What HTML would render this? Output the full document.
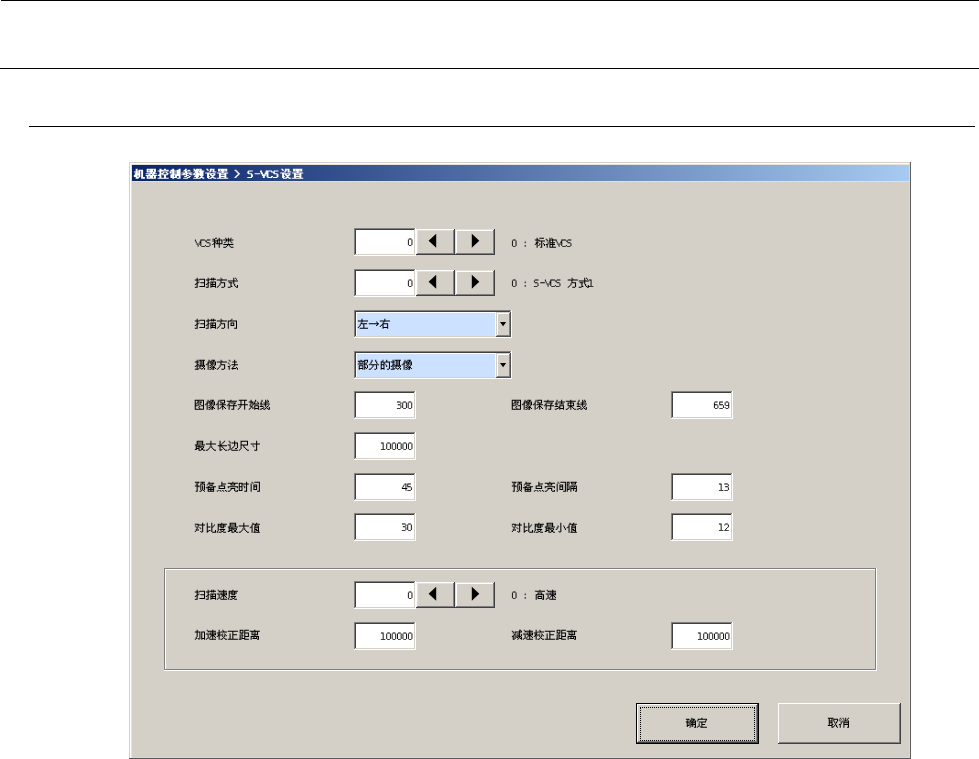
<!DOCTYPE html>
<html><head><meta charset="utf-8"><style>
html,body{margin:0;padding:0;background:#fff;}
body{width:979px;height:759px;position:relative;overflow:hidden;font-family:"Liberation Sans",sans-serif;}
.a{position:absolute;}
.t{position:absolute;overflow:visible;}
</style></head><body>

<div class="a" style="left:1px;top:0px;width:978px;height:1px;background:#000"></div>
<div class="a" style="left:0px;top:68px;width:979px;height:1px;background:#000"></div>
<div class="a" style="left:29px;top:126px;width:946px;height:1px;background:#000"></div>
<div class="a" style="left:129px;top:162px;width:782px;height:597px;background:#d4d0c8"></div>
<div class="a" style="left:130px;top:163px;width:780px;height:1px;background:#fff"></div>
<div class="a" style="left:130px;top:163px;width:1px;height:595px;background:#fff"></div>
<div class="a" style="left:131px;top:164px;width:778px;height:1px;background:#e6e2da"></div>
<div class="a" style="left:131px;top:164px;width:1px;height:593px;background:#e6e2da"></div>
<div class="a" style="left:909px;top:163px;width:1px;height:595px;background:#dcd8d0"></div>
<div class="a" style="left:131px;top:757px;width:779px;height:1px;background:#dcd8d0"></div>
<div class="a" style="left:910px;top:162px;width:1px;height:597px;background:#606060"></div>
<div class="a" style="left:129px;top:758px;width:782px;height:1px;background:#585858"></div>
<div class="a" style="left:132px;top:165px;width:777px;height:16px;background:linear-gradient(to right,#0a246a,#a6caf0)"></div>
<div class="a" style="left:132px;top:181px;width:777px;height:1px;background:#e4e0d8"></div>
<svg class="t" style="left:131.67px;top:166.50px" width="172.02" height="14.40" viewBox="0 0 188 16" preserveAspectRatio="none"><path fill="#fff" d="M4 2h2.12v1.12h-2.12zM16 2h10.12v1.12h-10.12zM30 2h2.12v1.12h-2.12zM35 2h2.12v1.12h-2.12zM44 2h2.12v1.12h-2.12zM51 2h2.12v1.12h-2.12zM58 2h2.12v1.12h-2.12zM67 2h2.12v1.12h-2.12zM70 2h6.12v1.12h-6.12zM81 2h2.12v1.12h-2.12zM85 2h5.12v1.12h-5.12zM94 2h10.12v1.12h-10.12zM163 2h2.12v1.12h-2.12zM167 2h5.12v1.12h-5.12zM176 2h10.12v1.12h-10.12zM4 3h2.12v1.12h-2.12zM7 3h5.12v1.12h-5.12zM16 3h2.12v1.12h-2.12zM19 3h4.12v1.12h-4.12zM24 3h2.12v1.12h-2.12zM30 3h10.12v1.12h-10.12zM42 3h4.12v1.12h-4.12zM49 3h4.12v1.12h-4.12zM57 3h2.12v1.12h-2.12zM61 3h2.12v1.12h-2.12zM68 3h5.12v1.12h-5.12zM74 3h2.12v1.12h-2.12zM82 3h2.12v1.12h-2.12zM85 3h2.12v1.12h-2.12zM88 3h2.12v1.12h-2.12zM94 3h2.12v1.12h-2.12zM97 3h4.12v1.12h-4.12zM102 3h2.12v1.12h-2.12zM112 3h2.12v1.12h-2.12zM164 3h2.12v1.12h-2.12zM167 3h2.12v1.12h-2.12zM170 3h2.12v1.12h-2.12zM176 3h2.12v1.12h-2.12zM179 3h4.12v1.12h-4.12zM184 3h2.12v1.12h-2.12zM4 4h2.12v1.12h-2.12zM7 4h2.12v1.12h-2.12zM10 4h2.12v1.12h-2.12zM16 4h2.12v1.12h-2.12zM19 4h4.12v1.12h-4.12zM24 4h2.12v1.12h-2.12zM28 4h6.12v1.12h-6.12zM38 4h2.12v1.12h-2.12zM42 4h11.12v1.12h-11.12zM56 4h8.12v1.12h-8.12zM67 4h12.12v1.12h-12.12zM85 4h2.12v1.12h-2.12zM88 4h2.12v1.12h-2.12zM94 4h10.12v1.12h-10.12zM113 4h2.12v1.12h-2.12zM127 4h5.12v1.12h-5.12zM140 4h2.12v1.12h-2.12zM146 4h7.12v1.12h-7.12zM155 4h5.12v1.12h-5.12zM167 4h2.12v1.12h-2.12zM170 4h2.12v1.12h-2.12zM176 4h10.12v1.12h-10.12zM2 5h7.12v1.12h-7.12zM10 5h2.12v1.12h-2.12zM16 5h10.12v1.12h-10.12zM30 5h2.12v1.12h-2.12zM34 5h4.12v1.12h-4.12zM41 5h2.12v1.12h-2.12zM44 5h2.12v1.12h-2.12zM49 5h4.12v1.12h-4.12zM58 5h2.12v1.12h-2.12zM69 5h3.12v1.12h-3.12zM73 5h5.12v1.12h-5.12zM84 5h2.12v1.12h-2.12zM88 5h4.12v1.12h-4.12zM98 5h2.12v1.12h-2.12zM114 5h2.12v1.12h-2.12zM126 5h2.12v1.12h-2.12zM140 5h2.12v1.12h-2.12zM146 5h3.12v1.12h-3.12zM152 5h4.12v1.12h-4.12zM166 5h2.12v1.12h-2.12zM170 5h4.12v1.12h-4.12zM180 5h2.12v1.12h-2.12zM4 6h2.12v1.12h-2.12zM7 6h2.12v1.12h-2.12zM10 6h2.12v1.12h-2.12zM20 6h2.12v1.12h-2.12zM23 6h2.12v1.12h-2.12zM30 6h2.12v1.12h-2.12zM33 6h2.12v1.12h-2.12zM37 6h2.12v1.12h-2.12zM41 6h12.12v1.12h-12.12zM54 6h12.12v1.12h-12.12zM68 6h5.12v1.12h-5.12zM74 6h4.12v1.12h-4.12zM80 6h4.12v1.12h-4.12zM93 6h12.12v1.12h-12.12zM115 6h2.12v1.12h-2.12zM126 6h2.12v1.12h-2.12zM141 6h2.12v1.12h-2.12zM145 6h4.12v1.12h-4.12zM154 6h2.12v1.12h-2.12zM162 6h4.12v1.12h-4.12zM175 6h12.12v1.12h-12.12zM3 7h6.12v1.12h-6.12zM10 7h2.12v1.12h-2.12zM15 7h12.12v1.12h-12.12zM30 7h4.12v1.12h-4.12zM38 7h2.12v1.12h-2.12zM44 7h2.12v1.12h-2.12zM49 7h4.12v1.12h-4.12zM56 7h2.12v1.12h-2.12zM59 7h2.12v1.12h-2.12zM62 7h2.12v1.12h-2.12zM67 7h2.12v1.12h-2.12zM70 7h8.12v1.12h-8.12zM82 7h9.12v1.12h-9.12zM95 7h2.12v1.12h-2.12zM101 7h2.12v1.12h-2.12zM116 7h2.12v1.12h-2.12zM127 7h4.12v1.12h-4.12zM134 7h6.12v1.12h-6.12zM141 7h2.12v1.12h-2.12zM145 7h4.12v1.12h-4.12zM155 7h4.12v1.12h-4.12zM164 7h9.12v1.12h-9.12zM177 7h2.12v1.12h-2.12zM183 7h2.12v1.12h-2.12zM3 8h6.12v1.12h-6.12zM10 8h2.12v1.12h-2.12zM18 8h2.12v1.12h-2.12zM22 8h2.12v1.12h-2.12zM29 8h3.12v1.12h-3.12zM33 8h6.12v1.12h-6.12zM42 8h11.12v1.12h-11.12zM54 8h6.12v1.12h-6.12zM63 8h3.12v1.12h-3.12zM67 8h11.12v1.12h-11.12zM82 8h2.12v1.12h-2.12zM85 8h2.12v1.12h-2.12zM89 8h2.12v1.12h-2.12zM95 8h8.12v1.12h-8.12zM115 8h2.12v1.12h-2.12zM130 8h2.12v1.12h-2.12zM142 8h4.12v1.12h-4.12zM147 8h2.12v1.12h-2.12zM158 8h2.12v1.12h-2.12zM164 8h2.12v1.12h-2.12zM167 8h2.12v1.12h-2.12zM171 8h2.12v1.12h-2.12zM177 8h8.12v1.12h-8.12zM2 9h4.12v1.12h-4.12zM7 9h2.12v1.12h-2.12zM10 9h2.12v1.12h-2.12zM15 9h12.12v1.12h-12.12zM28 9h4.12v1.12h-4.12zM35 9h2.12v1.12h-2.12zM42 9h4.12v1.12h-4.12zM47 9h6.12v1.12h-6.12zM59 9h3.12v1.12h-3.12zM69 9h4.12v1.12h-4.12zM74 9h4.12v1.12h-4.12zM82 9h2.12v1.12h-2.12zM86 9h4.12v1.12h-4.12zM95 9h2.12v1.12h-2.12zM101 9h2.12v1.12h-2.12zM114 9h2.12v1.12h-2.12zM130 9h2.12v1.12h-2.12zM142 9h4.12v1.12h-4.12zM147 9h2.12v1.12h-2.12zM158 9h2.12v1.12h-2.12zM164 9h2.12v1.12h-2.12zM168 9h4.12v1.12h-4.12zM177 9h2.12v1.12h-2.12zM183 9h2.12v1.12h-2.12zM2 10h4.12v1.12h-4.12zM7 10h2.12v1.12h-2.12zM10 10h2.12v1.12h-2.12zM16 10h2.12v1.12h-2.12zM19 10h4.12v1.12h-4.12zM24 10h2.12v1.12h-2.12zM30 10h2.12v1.12h-2.12zM35 10h2.12v1.12h-2.12zM42 10h4.12v1.12h-4.12zM47 10h2.12v1.12h-2.12zM51 10h2.12v1.12h-2.12zM57 10h3.12v1.12h-3.12zM62 10h2.12v1.12h-2.12zM68 10h5.12v1.12h-5.12zM75 10h2.12v1.12h-2.12zM82 10h3.12v1.12h-3.12zM87 10h2.12v1.12h-2.12zM95 10h8.12v1.12h-8.12zM113 10h2.12v1.12h-2.12zM130 10h2.12v1.12h-2.12zM143 10h2.12v1.12h-2.12zM147 10h2.12v1.12h-2.12zM152 10h2.12v1.12h-2.12zM158 10h2.12v1.12h-2.12zM164 10h3.12v1.12h-3.12zM169 10h2.12v1.12h-2.12zM177 10h8.12v1.12h-8.12zM4 11h4.12v1.12h-4.12zM10 11h4.12v1.12h-4.12zM16 11h2.12v1.12h-2.12zM19 11h4.12v1.12h-4.12zM24 11h2.12v1.12h-2.12zM30 11h2.12v1.12h-2.12zM35 11h2.12v1.12h-2.12zM42 11h7.12v1.12h-7.12zM51 11h2.12v1.12h-2.12zM60 11h3.12v1.12h-3.12zM70 11h2.12v1.12h-2.12zM74 11h4.12v1.12h-4.12zM82 11h2.12v1.12h-2.12zM86 11h4.12v1.12h-4.12zM95 11h2.12v1.12h-2.12zM101 11h2.12v1.12h-2.12zM112 11h2.12v1.12h-2.12zM126 11h5.12v1.12h-5.12zM143 11h2.12v1.12h-2.12zM148 11h5.12v1.12h-5.12zM154 11h5.12v1.12h-5.12zM164 11h2.12v1.12h-2.12zM168 11h4.12v1.12h-4.12zM177 11h2.12v1.12h-2.12zM183 11h2.12v1.12h-2.12zM4 12h3.12v1.12h-3.12zM10 12h4.12v1.12h-4.12zM16 12h10.12v1.12h-10.12zM28 12h12.12v1.12h-12.12zM44 12h2.12v1.12h-2.12zM49 12h4.12v1.12h-4.12zM56 12h5.12v1.12h-5.12zM67 12h8.12v1.12h-8.12zM77 12h2.12v1.12h-2.12zM83 12h4.12v1.12h-4.12zM89 12h3.12v1.12h-3.12zM93 12h12.12v1.12h-12.12zM165 12h4.12v1.12h-4.12zM171 12h3.12v1.12h-3.12zM175 12h12.12v1.12h-12.12z"/></svg>
<svg class="t" style="left:194.09px;top:235.50px" width="40.26" height="14.40" viewBox="0 0 44 16" preserveAspectRatio="none"><path fill="#000" d="M23 2h2.12v1.12h-2.12zM27 2h1.12v1.12h-1.12zM34 2h1.12v1.12h-1.12zM37 2h1.12v1.12h-1.12zM40 2h1.12v1.12h-1.12zM21 3h2.12v1.12h-2.12zM27 3h1.12v1.12h-1.12zM35 3h1.12v1.12h-1.12zM37 3h1.12v1.12h-1.12zM39 3h1.12v1.12h-1.12zM22 4h1.12v1.12h-1.12zM25 4h6.12v1.12h-6.12zM32 4h11.12v1.12h-11.12zM21 5h5.12v1.12h-5.12zM27 5h1.12v1.12h-1.12zM30 5h1.12v1.12h-1.12zM35 5h1.12v1.12h-1.12zM37 5h1.12v1.12h-1.12zM39 5h1.12v1.12h-1.12zM22 6h1.12v1.12h-1.12zM25 6h1.12v1.12h-1.12zM27 6h1.12v1.12h-1.12zM30 6h1.12v1.12h-1.12zM34 6h1.12v1.12h-1.12zM37 6h1.12v1.12h-1.12zM40 6h1.12v1.12h-1.12zM22 7h2.12v1.12h-2.12zM25 7h1.12v1.12h-1.12zM27 7h1.12v1.12h-1.12zM30 7h1.12v1.12h-1.12zM33 7h1.12v1.12h-1.12zM41 7h1.12v1.12h-1.12zM21 8h2.12v1.12h-2.12zM24 8h7.12v1.12h-7.12zM37 8h1.12v1.12h-1.12zM22 9h1.12v1.12h-1.12zM27 9h1.12v1.12h-1.12zM32 9h11.12v1.12h-11.12zM22 10h1.12v1.12h-1.12zM27 10h1.12v1.12h-1.12zM36 10h1.12v1.12h-1.12zM38 10h1.12v1.12h-1.12zM22 11h1.12v1.12h-1.12zM27 11h1.12v1.12h-1.12zM35 11h1.12v1.12h-1.12zM39 11h1.12v1.12h-1.12zM22 12h1.12v1.12h-1.12zM27 12h1.12v1.12h-1.12zM32 12h3.12v1.12h-3.12zM40 12h3.12v1.12h-3.12zM20 3h1v1h-1zM1 4h1v1h-1zM7 4h5v1h-5zM14 4h4v1h-4zM1 5h1v1h-1zM7 5h1v1h-1zM12 5h2v1h-2zM20 5h1v1h-1zM2 6h1v1h-1zM6 6h2v1h-2zM13 6h1v1h-1zM2 7h1v1h-1zM6 7h2v1h-2zM14 7h3v1h-3zM3 8h1v1h-1zM5 8h1v1h-1zM7 8h1v1h-1zM17 8h1v1h-1zM3 9h1v1h-1zM5 9h1v1h-1zM7 9h1v1h-1zM17 9h1v1h-1zM20 9h1v1h-1zM4 10h1v1h-1zM7 10h1v1h-1zM12 10h1v1h-1zM17 10h1v1h-1zM4 11h1v1h-1zM8 11h4v1h-4zM13 11h4v1h-4z"/></svg>
<svg class="t" style="left:193.17px;top:275.70px" width="45.75" height="14.40" viewBox="0 0 50 16" preserveAspectRatio="none"><path fill="#000" d="M4 2h1.12v1.12h-1.12zM16 2h1.12v1.12h-1.12zM20 2h1.12v1.12h-1.12zM22 2h1.12v1.12h-1.12zM30 2h1.12v1.12h-1.12zM44 2h1.12v1.12h-1.12zM46 2h1.12v1.12h-1.12zM4 3h1.12v1.12h-1.12zM7 3h6.12v1.12h-6.12zM16 3h1.12v1.12h-1.12zM18 3h7.12v1.12h-7.12zM31 3h1.12v1.12h-1.12zM44 3h1.12v1.12h-1.12zM47 3h1.12v1.12h-1.12zM2 4h5.12v1.12h-5.12zM12 4h1.12v1.12h-1.12zM14 4h4.12v1.12h-4.12zM20 4h1.12v1.12h-1.12zM22 4h1.12v1.12h-1.12zM26 4h11.12v1.12h-11.12zM44 4h1.12v1.12h-1.12zM4 5h1.12v1.12h-1.12zM12 5h1.12v1.12h-1.12zM16 5h1.12v1.12h-1.12zM30 5h1.12v1.12h-1.12zM38 5h11.12v1.12h-11.12zM4 6h1.12v1.12h-1.12zM6 6h1.12v1.12h-1.12zM12 6h1.12v1.12h-1.12zM16 6h1.12v1.12h-1.12zM19 6h6.12v1.12h-6.12zM30 6h1.12v1.12h-1.12zM44 6h1.12v1.12h-1.12zM4 7h2.12v1.12h-2.12zM8 7h5.12v1.12h-5.12zM16 7h2.12v1.12h-2.12zM19 7h1.12v1.12h-1.12zM21 7h1.12v1.12h-1.12zM24 7h1.12v1.12h-1.12zM30 7h5.12v1.12h-5.12zM39 7h4.12v1.12h-4.12zM44 7h1.12v1.12h-1.12zM3 8h2.12v1.12h-2.12zM12 8h1.12v1.12h-1.12zM15 8h2.12v1.12h-2.12zM19 8h1.12v1.12h-1.12zM21 8h1.12v1.12h-1.12zM24 8h1.12v1.12h-1.12zM29 8h1.12v1.12h-1.12zM34 8h1.12v1.12h-1.12zM41 8h1.12v1.12h-1.12zM44 8h1.12v1.12h-1.12zM2 9h1.12v1.12h-1.12zM4 9h1.12v1.12h-1.12zM12 9h1.12v1.12h-1.12zM14 9h1.12v1.12h-1.12zM16 9h1.12v1.12h-1.12zM19 9h6.12v1.12h-6.12zM29 9h1.12v1.12h-1.12zM34 9h1.12v1.12h-1.12zM41 9h1.12v1.12h-1.12zM45 9h1.12v1.12h-1.12zM4 10h1.12v1.12h-1.12zM12 10h1.12v1.12h-1.12zM16 10h1.12v1.12h-1.12zM19 10h1.12v1.12h-1.12zM21 10h1.12v1.12h-1.12zM24 10h1.12v1.12h-1.12zM28 10h1.12v1.12h-1.12zM34 10h1.12v1.12h-1.12zM41 10h1.12v1.12h-1.12zM45 10h1.12v1.12h-1.12zM48 10h1.12v1.12h-1.12zM4 11h1.12v1.12h-1.12zM7 11h6.12v1.12h-6.12zM16 11h1.12v1.12h-1.12zM19 11h6.12v1.12h-6.12zM27 11h1.12v1.12h-1.12zM34 11h1.12v1.12h-1.12zM41 11h2.12v1.12h-2.12zM46 11h1.12v1.12h-1.12zM48 11h1.12v1.12h-1.12zM2 12h3.12v1.12h-3.12zM14 12h3.12v1.12h-3.12zM19 12h1.12v1.12h-1.12zM24 12h1.12v1.12h-1.12zM26 12h1.12v1.12h-1.12zM31 12h3.12v1.12h-3.12zM38 12h3.12v1.12h-3.12zM47 12h2.12v1.12h-2.12z"/></svg>
<svg class="t" style="left:193.17px;top:316.60px" width="44.84" height="14.40" viewBox="0 0 49 16" preserveAspectRatio="none"><path fill="#000" d="M4 2h1.12v1.12h-1.12zM16 2h1.12v1.12h-1.12zM20 2h1.12v1.12h-1.12zM22 2h1.12v1.12h-1.12zM30 2h1.12v1.12h-1.12zM42 2h1.12v1.12h-1.12zM4 3h1.12v1.12h-1.12zM7 3h6.12v1.12h-6.12zM16 3h1.12v1.12h-1.12zM18 3h7.12v1.12h-7.12zM31 3h1.12v1.12h-1.12zM41 3h1.12v1.12h-1.12zM2 4h5.12v1.12h-5.12zM12 4h1.12v1.12h-1.12zM14 4h4.12v1.12h-4.12zM20 4h1.12v1.12h-1.12zM22 4h1.12v1.12h-1.12zM26 4h11.12v1.12h-11.12zM38 4h10.12v1.12h-10.12zM4 5h1.12v1.12h-1.12zM12 5h1.12v1.12h-1.12zM16 5h1.12v1.12h-1.12zM30 5h1.12v1.12h-1.12zM38 5h1.12v1.12h-1.12zM47 5h1.12v1.12h-1.12zM4 6h1.12v1.12h-1.12zM6 6h1.12v1.12h-1.12zM12 6h1.12v1.12h-1.12zM16 6h1.12v1.12h-1.12zM19 6h6.12v1.12h-6.12zM30 6h1.12v1.12h-1.12zM38 6h1.12v1.12h-1.12zM41 6h4.12v1.12h-4.12zM47 6h1.12v1.12h-1.12zM4 7h2.12v1.12h-2.12zM8 7h5.12v1.12h-5.12zM16 7h2.12v1.12h-2.12zM19 7h1.12v1.12h-1.12zM21 7h1.12v1.12h-1.12zM24 7h1.12v1.12h-1.12zM30 7h5.12v1.12h-5.12zM38 7h1.12v1.12h-1.12zM41 7h1.12v1.12h-1.12zM44 7h1.12v1.12h-1.12zM47 7h1.12v1.12h-1.12zM3 8h2.12v1.12h-2.12zM12 8h1.12v1.12h-1.12zM15 8h2.12v1.12h-2.12zM19 8h1.12v1.12h-1.12zM21 8h1.12v1.12h-1.12zM24 8h1.12v1.12h-1.12zM29 8h1.12v1.12h-1.12zM34 8h1.12v1.12h-1.12zM38 8h1.12v1.12h-1.12zM41 8h1.12v1.12h-1.12zM44 8h1.12v1.12h-1.12zM47 8h1.12v1.12h-1.12zM2 9h1.12v1.12h-1.12zM4 9h1.12v1.12h-1.12zM12 9h1.12v1.12h-1.12zM14 9h1.12v1.12h-1.12zM16 9h1.12v1.12h-1.12zM19 9h6.12v1.12h-6.12zM29 9h1.12v1.12h-1.12zM34 9h1.12v1.12h-1.12zM38 9h1.12v1.12h-1.12zM41 9h4.12v1.12h-4.12zM47 9h1.12v1.12h-1.12zM4 10h1.12v1.12h-1.12zM12 10h1.12v1.12h-1.12zM16 10h1.12v1.12h-1.12zM19 10h1.12v1.12h-1.12zM21 10h1.12v1.12h-1.12zM24 10h1.12v1.12h-1.12zM28 10h1.12v1.12h-1.12zM34 10h1.12v1.12h-1.12zM38 10h1.12v1.12h-1.12zM47 10h1.12v1.12h-1.12zM4 11h1.12v1.12h-1.12zM7 11h6.12v1.12h-6.12zM16 11h1.12v1.12h-1.12zM19 11h6.12v1.12h-6.12zM27 11h1.12v1.12h-1.12zM34 11h1.12v1.12h-1.12zM38 11h1.12v1.12h-1.12zM47 11h1.12v1.12h-1.12zM2 12h3.12v1.12h-3.12zM14 12h3.12v1.12h-3.12zM19 12h1.12v1.12h-1.12zM24 12h1.12v1.12h-1.12zM26 12h1.12v1.12h-1.12zM31 12h3.12v1.12h-3.12zM38 12h1.12v1.12h-1.12zM45 12h3.12v1.12h-3.12z"/></svg>
<svg class="t" style="left:193.17px;top:357.60px" width="45.75" height="14.40" viewBox="0 0 50 16" preserveAspectRatio="none"><path fill="#000" d="M4 2h1.12v1.12h-1.12zM6 2h7.12v1.12h-7.12zM17 2h1.12v1.12h-1.12zM20 2h4.12v1.12h-4.12zM30 2h1.12v1.12h-1.12zM39 2h1.12v1.12h-1.12zM45 2h1.12v1.12h-1.12zM4 3h1.12v1.12h-1.12zM8 3h1.12v1.12h-1.12zM11 3h1.12v1.12h-1.12zM17 3h1.12v1.12h-1.12zM19 3h1.12v1.12h-1.12zM22 3h1.12v1.12h-1.12zM31 3h1.12v1.12h-1.12zM40 3h1.12v1.12h-1.12zM45 3h1.12v1.12h-1.12zM2 4h5.12v1.12h-5.12zM8 4h4.12v1.12h-4.12zM16 4h1.12v1.12h-1.12zM18 4h7.12v1.12h-7.12zM26 4h11.12v1.12h-11.12zM43 4h5.12v1.12h-5.12zM4 5h1.12v1.12h-1.12zM8 5h1.12v1.12h-1.12zM11 5h1.12v1.12h-1.12zM16 5h2.12v1.12h-2.12zM19 5h1.12v1.12h-1.12zM21 5h1.12v1.12h-1.12zM24 5h1.12v1.12h-1.12zM30 5h1.12v1.12h-1.12zM38 5h1.12v1.12h-1.12zM45 5h1.12v1.12h-1.12zM4 6h1.12v1.12h-1.12zM6 6h1.12v1.12h-1.12zM8 6h4.12v1.12h-4.12zM15 6h2.12v1.12h-2.12zM19 6h6.12v1.12h-6.12zM30 6h1.12v1.12h-1.12zM39 6h1.12v1.12h-1.12zM45 6h1.12v1.12h-1.12zM4 7h2.12v1.12h-2.12zM8 7h1.12v1.12h-1.12zM11 7h1.12v1.12h-1.12zM14 7h1.12v1.12h-1.12zM16 7h1.12v1.12h-1.12zM20 7h1.12v1.12h-1.12zM24 7h1.12v1.12h-1.12zM30 7h5.12v1.12h-5.12zM42 7h7.12v1.12h-7.12zM3 8h2.12v1.12h-2.12zM6 8h7.12v1.12h-7.12zM16 8h1.12v1.12h-1.12zM18 8h2.12v1.12h-2.12zM21 8h1.12v1.12h-1.12zM23 8h1.12v1.12h-1.12zM29 8h1.12v1.12h-1.12zM34 8h1.12v1.12h-1.12zM40 8h1.12v1.12h-1.12zM45 8h1.12v1.12h-1.12zM2 9h1.12v1.12h-1.12zM4 9h1.12v1.12h-1.12zM6 9h1.12v1.12h-1.12zM8 9h1.12v1.12h-1.12zM10 9h1.12v1.12h-1.12zM12 9h1.12v1.12h-1.12zM16 9h1.12v1.12h-1.12zM20 9h1.12v1.12h-1.12zM22 9h1.12v1.12h-1.12zM29 9h1.12v1.12h-1.12zM34 9h1.12v1.12h-1.12zM38 9h2.12v1.12h-2.12zM44 9h1.12v1.12h-1.12zM4 10h1.12v1.12h-1.12zM7 10h1.12v1.12h-1.12zM11 10h1.12v1.12h-1.12zM16 10h1.12v1.12h-1.12zM18 10h2.12v1.12h-2.12zM21 10h3.12v1.12h-3.12zM28 10h1.12v1.12h-1.12zM34 10h1.12v1.12h-1.12zM39 10h1.12v1.12h-1.12zM43 10h1.12v1.12h-1.12zM47 10h1.12v1.12h-1.12zM4 11h1.12v1.12h-1.12zM6 11h1.12v1.12h-1.12zM8 11h1.12v1.12h-1.12zM10 11h1.12v1.12h-1.12zM12 11h1.12v1.12h-1.12zM16 11h1.12v1.12h-1.12zM20 11h1.12v1.12h-1.12zM22 11h1.12v1.12h-1.12zM24 11h1.12v1.12h-1.12zM27 11h1.12v1.12h-1.12zM34 11h1.12v1.12h-1.12zM39 11h1.12v1.12h-1.12zM42 11h5.12v1.12h-5.12zM48 11h1.12v1.12h-1.12zM2 12h4.12v1.12h-4.12zM9 12h1.12v1.12h-1.12zM12 12h1.12v1.12h-1.12zM16 12h1.12v1.12h-1.12zM18 12h2.12v1.12h-2.12zM21 12h2.12v1.12h-2.12zM26 12h1.12v1.12h-1.12zM31 12h3.12v1.12h-3.12zM39 12h1.12v1.12h-1.12zM43 12h1.12v1.12h-1.12zM48 12h1.12v1.12h-1.12z"/></svg>
<svg class="t" style="left:192.25px;top:398.10px" width="78.69" height="14.40" viewBox="0 0 86 16" preserveAspectRatio="none"><path fill="#000" d="M3 2h10.12v1.12h-10.12zM17 2h1.12v1.12h-1.12zM20 2h4.12v1.12h-4.12zM29 2h1.12v1.12h-1.12zM31 2h5.12v1.12h-5.12zM42 2h1.12v1.12h-1.12zM51 2h9.12v1.12h-9.12zM64 2h1.12v1.12h-1.12zM69 2h1.12v1.12h-1.12zM76 2h1.12v1.12h-1.12zM80 2h1.12v1.12h-1.12zM82 2h1.12v1.12h-1.12zM3 3h1.12v1.12h-1.12zM6 3h1.12v1.12h-1.12zM12 3h1.12v1.12h-1.12zM17 3h1.12v1.12h-1.12zM19 3h1.12v1.12h-1.12zM22 3h1.12v1.12h-1.12zM29 3h1.12v1.12h-1.12zM31 3h1.12v1.12h-1.12zM35 3h1.12v1.12h-1.12zM38 3h11.12v1.12h-11.12zM53 3h1.12v1.12h-1.12zM57 3h1.12v1.12h-1.12zM64 3h1.12v1.12h-1.12zM69 3h1.12v1.12h-1.12zM76 3h1.12v1.12h-1.12zM80 3h1.12v1.12h-1.12zM83 3h1.12v1.12h-1.12zM3 4h1.12v1.12h-1.12zM6 4h5.12v1.12h-5.12zM12 4h1.12v1.12h-1.12zM16 4h1.12v1.12h-1.12zM18 4h7.12v1.12h-7.12zM28 4h1.12v1.12h-1.12zM31 4h1.12v1.12h-1.12zM35 4h1.12v1.12h-1.12zM41 4h1.12v1.12h-1.12zM53 4h1.12v1.12h-1.12zM57 4h1.12v1.12h-1.12zM62 4h5.12v1.12h-5.12zM68 4h1.12v1.12h-1.12zM71 4h1.12v1.12h-1.12zM75 4h1.12v1.12h-1.12zM80 4h4.12v1.12h-4.12zM3 5h1.12v1.12h-1.12zM5 5h2.12v1.12h-2.12zM9 5h1.12v1.12h-1.12zM12 5h1.12v1.12h-1.12zM16 5h2.12v1.12h-2.12zM19 5h1.12v1.12h-1.12zM21 5h1.12v1.12h-1.12zM24 5h1.12v1.12h-1.12zM28 5h1.12v1.12h-1.12zM31 5h5.12v1.12h-5.12zM40 5h1.12v1.12h-1.12zM42 5h6.12v1.12h-6.12zM53 5h1.12v1.12h-1.12zM57 5h1.12v1.12h-1.12zM64 5h1.12v1.12h-1.12zM66 5h1.12v1.12h-1.12zM68 5h1.12v1.12h-1.12zM72 5h1.12v1.12h-1.12zM75 5h1.12v1.12h-1.12zM78 5h3.12v1.12h-3.12zM3 6h2.12v1.12h-2.12zM7 6h2.12v1.12h-2.12zM12 6h1.12v1.12h-1.12zM15 6h2.12v1.12h-2.12zM19 6h6.12v1.12h-6.12zM27 6h2.12v1.12h-2.12zM33 6h1.12v1.12h-1.12zM40 6h1.12v1.12h-1.12zM46 6h1.12v1.12h-1.12zM53 6h1.12v1.12h-1.12zM57 6h1.12v1.12h-1.12zM64 6h1.12v1.12h-1.12zM66 6h7.12v1.12h-7.12zM74 6h3.12v1.12h-3.12zM80 6h5.12v1.12h-5.12zM3 7h1.12v1.12h-1.12zM6 7h1.12v1.12h-1.12zM9 7h1.12v1.12h-1.12zM12 7h1.12v1.12h-1.12zM14 7h1.12v1.12h-1.12zM16 7h1.12v1.12h-1.12zM20 7h1.12v1.12h-1.12zM24 7h1.12v1.12h-1.12zM26 7h1.12v1.12h-1.12zM28 7h1.12v1.12h-1.12zM30 7h7.12v1.12h-7.12zM39 7h2.12v1.12h-2.12zM45 7h1.12v1.12h-1.12zM50 7h11.12v1.12h-11.12zM63 7h1.12v1.12h-1.12zM66 7h1.12v1.12h-1.12zM76 7h1.12v1.12h-1.12zM78 7h3.12v1.12h-3.12zM3 8h3.12v1.12h-3.12zM7 8h1.12v1.12h-1.12zM10 8h3.12v1.12h-3.12zM16 8h1.12v1.12h-1.12zM18 8h2.12v1.12h-2.12zM21 8h1.12v1.12h-1.12zM23 8h1.12v1.12h-1.12zM28 8h1.12v1.12h-1.12zM33 8h1.12v1.12h-1.12zM38 8h1.12v1.12h-1.12zM40 8h9.12v1.12h-9.12zM53 8h1.12v1.12h-1.12zM57 8h1.12v1.12h-1.12zM63 8h1.12v1.12h-1.12zM65 8h1.12v1.12h-1.12zM68 8h5.12v1.12h-5.12zM75 8h1.12v1.12h-1.12zM80 8h1.12v1.12h-1.12zM83 8h1.12v1.12h-1.12zM3 9h1.12v1.12h-1.12zM8 9h1.12v1.12h-1.12zM12 9h1.12v1.12h-1.12zM16 9h1.12v1.12h-1.12zM20 9h1.12v1.12h-1.12zM22 9h1.12v1.12h-1.12zM28 9h1.12v1.12h-1.12zM32 9h3.12v1.12h-3.12zM40 9h1.12v1.12h-1.12zM45 9h1.12v1.12h-1.12zM52 9h1.12v1.12h-1.12zM57 9h1.12v1.12h-1.12zM64 9h2.12v1.12h-2.12zM68 9h1.12v1.12h-1.12zM72 9h1.12v1.12h-1.12zM74 9h4.12v1.12h-4.12zM80 9h1.12v1.12h-1.12zM82 9h1.12v1.12h-1.12zM3 10h1.12v1.12h-1.12zM7 10h1.12v1.12h-1.12zM12 10h1.12v1.12h-1.12zM16 10h1.12v1.12h-1.12zM18 10h2.12v1.12h-2.12zM21 10h3.12v1.12h-3.12zM28 10h1.12v1.12h-1.12zM31 10h1.12v1.12h-1.12zM33 10h1.12v1.12h-1.12zM35 10h1.12v1.12h-1.12zM40 10h1.12v1.12h-1.12zM45 10h1.12v1.12h-1.12zM52 10h1.12v1.12h-1.12zM57 10h1.12v1.12h-1.12zM64 10h1.12v1.12h-1.12zM66 10h1.12v1.12h-1.12zM68 10h1.12v1.12h-1.12zM72 10h1.12v1.12h-1.12zM78 10h1.12v1.12h-1.12zM81 10h1.12v1.12h-1.12zM84 10h1.12v1.12h-1.12zM3 11h1.12v1.12h-1.12zM8 11h1.12v1.12h-1.12zM12 11h1.12v1.12h-1.12zM16 11h1.12v1.12h-1.12zM20 11h1.12v1.12h-1.12zM22 11h1.12v1.12h-1.12zM24 11h1.12v1.12h-1.12zM28 11h1.12v1.12h-1.12zM30 11h1.12v1.12h-1.12zM33 11h1.12v1.12h-1.12zM36 11h1.12v1.12h-1.12zM40 11h1.12v1.12h-1.12zM45 11h1.12v1.12h-1.12zM51 11h1.12v1.12h-1.12zM57 11h1.12v1.12h-1.12zM63 11h1.12v1.12h-1.12zM66 11h1.12v1.12h-1.12zM68 11h5.12v1.12h-5.12zM76 11h2.12v1.12h-2.12zM80 11h1.12v1.12h-1.12zM82 11h1.12v1.12h-1.12zM84 11h1.12v1.12h-1.12zM3 12h10.12v1.12h-10.12zM16 12h1.12v1.12h-1.12zM18 12h2.12v1.12h-2.12zM21 12h2.12v1.12h-2.12zM28 12h1.12v1.12h-1.12zM33 12h1.12v1.12h-1.12zM40 12h1.12v1.12h-1.12zM43 12h3.12v1.12h-3.12zM50 12h1.12v1.12h-1.12zM57 12h1.12v1.12h-1.12zM62 12h1.12v1.12h-1.12zM68 12h1.12v1.12h-1.12zM72 12h1.12v1.12h-1.12zM74 12h2.12v1.12h-2.12zM78 12h2.12v1.12h-2.12zM83 12h2.12v1.12h-2.12z"/></svg>
<svg class="t" style="left:193.17px;top:438.60px" width="67.71" height="14.40" viewBox="0 0 74 16" preserveAspectRatio="none"><path fill="#000" d="M4 2h7.12v1.12h-7.12zM19 2h1.12v1.12h-1.12zM29 2h1.12v1.12h-1.12zM34 2h1.12v1.12h-1.12zM39 2h1.12v1.12h-1.12zM45 2h1.12v1.12h-1.12zM52 2h8.12v1.12h-8.12zM69 2h1.12v1.12h-1.12zM4 3h1.12v1.12h-1.12zM10 3h1.12v1.12h-1.12zM19 3h1.12v1.12h-1.12zM29 3h1.12v1.12h-1.12zM33 3h1.12v1.12h-1.12zM40 3h1.12v1.12h-1.12zM45 3h1.12v1.12h-1.12zM52 3h1.12v1.12h-1.12zM59 3h1.12v1.12h-1.12zM69 3h1.12v1.12h-1.12zM4 4h7.12v1.12h-7.12zM19 4h1.12v1.12h-1.12zM29 4h1.12v1.12h-1.12zM32 4h1.12v1.12h-1.12zM40 4h1.12v1.12h-1.12zM42 4h7.12v1.12h-7.12zM52 4h1.12v1.12h-1.12zM59 4h1.12v1.12h-1.12zM69 4h1.12v1.12h-1.12zM4 5h1.12v1.12h-1.12zM10 5h1.12v1.12h-1.12zM14 5h11.12v1.12h-11.12zM29 5h1.12v1.12h-1.12zM31 5h1.12v1.12h-1.12zM45 5h1.12v1.12h-1.12zM48 5h1.12v1.12h-1.12zM52 5h1.12v1.12h-1.12zM59 5h1.12v1.12h-1.12zM63 5h10.12v1.12h-10.12zM2 6h11.12v1.12h-11.12zM19 6h1.12v1.12h-1.12zM29 6h2.12v1.12h-2.12zM38 6h3.12v1.12h-3.12zM45 6h1.12v1.12h-1.12zM48 6h1.12v1.12h-1.12zM52 6h8.12v1.12h-8.12zM69 6h1.12v1.12h-1.12zM3 7h1.12v1.12h-1.12zM6 7h1.12v1.12h-1.12zM19 7h1.12v1.12h-1.12zM27 7h10.12v1.12h-10.12zM40 7h1.12v1.12h-1.12zM45 7h1.12v1.12h-1.12zM48 7h1.12v1.12h-1.12zM52 7h1.12v1.12h-1.12zM55 7h1.12v1.12h-1.12zM65 7h1.12v1.12h-1.12zM69 7h1.12v1.12h-1.12zM3 8h9.12v1.12h-9.12zM18 8h1.12v1.12h-1.12zM20 8h1.12v1.12h-1.12zM29 8h1.12v1.12h-1.12zM31 8h1.12v1.12h-1.12zM40 8h1.12v1.12h-1.12zM44 8h1.12v1.12h-1.12zM48 8h1.12v1.12h-1.12zM52 8h1.12v1.12h-1.12zM55 8h1.12v1.12h-1.12zM66 8h1.12v1.12h-1.12zM69 8h1.12v1.12h-1.12zM3 9h1.12v1.12h-1.12zM6 9h1.12v1.12h-1.12zM8 9h1.12v1.12h-1.12zM11 9h1.12v1.12h-1.12zM18 9h1.12v1.12h-1.12zM20 9h1.12v1.12h-1.12zM29 9h1.12v1.12h-1.12zM32 9h1.12v1.12h-1.12zM40 9h1.12v1.12h-1.12zM43 9h1.12v1.12h-1.12zM48 9h1.12v1.12h-1.12zM52 9h1.12v1.12h-1.12zM56 9h1.12v1.12h-1.12zM69 9h1.12v1.12h-1.12zM3 10h4.12v1.12h-4.12zM9 10h2.12v1.12h-2.12zM17 10h1.12v1.12h-1.12zM21 10h1.12v1.12h-1.12zM29 10h1.12v1.12h-1.12zM33 10h1.12v1.12h-1.12zM40 10h1.12v1.12h-1.12zM42 10h1.12v1.12h-1.12zM46 10h2.12v1.12h-2.12zM52 10h1.12v1.12h-1.12zM57 10h1.12v1.12h-1.12zM69 10h1.12v1.12h-1.12zM2 11h2.12v1.12h-2.12zM6 11h1.12v1.12h-1.12zM9 11h2.12v1.12h-2.12zM16 11h1.12v1.12h-1.12zM22 11h1.12v1.12h-1.12zM29 11h1.12v1.12h-1.12zM31 11h1.12v1.12h-1.12zM34 11h1.12v1.12h-1.12zM39 11h1.12v1.12h-1.12zM41 11h1.12v1.12h-1.12zM51 11h1.12v1.12h-1.12zM58 11h1.12v1.12h-1.12zM69 11h1.12v1.12h-1.12zM6 12h3.12v1.12h-3.12zM11 12h2.12v1.12h-2.12zM14 12h2.12v1.12h-2.12zM23 12h2.12v1.12h-2.12zM29 12h2.12v1.12h-2.12zM35 12h2.12v1.12h-2.12zM38 12h1.12v1.12h-1.12zM42 12h7.12v1.12h-7.12zM50 12h1.12v1.12h-1.12zM59 12h2.12v1.12h-2.12zM67 12h3.12v1.12h-3.12z"/></svg>
<svg class="t" style="left:193.17px;top:480.10px" width="67.71" height="14.40" viewBox="0 0 74 16" preserveAspectRatio="none"><path fill="#000" d="M2 2h5.12v1.12h-5.12zM8 2h5.12v1.12h-5.12zM17 2h1.12v1.12h-1.12zM31 2h1.12v1.12h-1.12zM43 2h1.12v1.12h-1.12zM58 2h1.12v1.12h-1.12zM64 2h1.12v1.12h-1.12zM67 2h6.12v1.12h-6.12zM5 3h1.12v1.12h-1.12zM10 3h1.12v1.12h-1.12zM17 3h6.12v1.12h-6.12zM31 3h1.12v1.12h-1.12zM38 3h11.12v1.12h-11.12zM50 3h4.12v1.12h-4.12zM58 3h1.12v1.12h-1.12zM65 3h1.12v1.12h-1.12zM72 3h1.12v1.12h-1.12zM3 4h2.12v1.12h-2.12zM8 4h5.12v1.12h-5.12zM16 4h2.12v1.12h-2.12zM21 4h1.12v1.12h-1.12zM31 4h5.12v1.12h-5.12zM41 4h1.12v1.12h-1.12zM45 4h1.12v1.12h-1.12zM50 4h1.12v1.12h-1.12zM53 4h8.12v1.12h-8.12zM63 4h1.12v1.12h-1.12zM72 4h1.12v1.12h-1.12zM4 5h1.12v1.12h-1.12zM8 5h1.12v1.12h-1.12zM12 5h1.12v1.12h-1.12zM15 5h1.12v1.12h-1.12zM18 5h3.12v1.12h-3.12zM31 5h1.12v1.12h-1.12zM41 5h5.12v1.12h-5.12zM50 5h1.12v1.12h-1.12zM53 5h1.12v1.12h-1.12zM58 5h1.12v1.12h-1.12zM63 5h1.12v1.12h-1.12zM66 5h4.12v1.12h-4.12zM72 5h1.12v1.12h-1.12zM2 6h5.12v1.12h-5.12zM8 6h1.12v1.12h-1.12zM10 6h1.12v1.12h-1.12zM12 6h1.12v1.12h-1.12zM18 6h1.12v1.12h-1.12zM20 6h2.12v1.12h-2.12zM28 6h7.12v1.12h-7.12zM50 6h1.12v1.12h-1.12zM53 6h1.12v1.12h-1.12zM55 6h1.12v1.12h-1.12zM58 6h1.12v1.12h-1.12zM63 6h1.12v1.12h-1.12zM66 6h1.12v1.12h-1.12zM69 6h1.12v1.12h-1.12zM72 6h1.12v1.12h-1.12zM4 7h1.12v1.12h-1.12zM6 7h1.12v1.12h-1.12zM8 7h1.12v1.12h-1.12zM10 7h1.12v1.12h-1.12zM12 7h1.12v1.12h-1.12zM16 7h2.12v1.12h-2.12zM22 7h3.12v1.12h-3.12zM28 7h1.12v1.12h-1.12zM34 7h1.12v1.12h-1.12zM38 7h11.12v1.12h-11.12zM50 7h4.12v1.12h-4.12zM56 7h1.12v1.12h-1.12zM58 7h1.12v1.12h-1.12zM63 7h1.12v1.12h-1.12zM66 7h4.12v1.12h-4.12zM72 7h1.12v1.12h-1.12zM4 8h1.12v1.12h-1.12zM8 8h1.12v1.12h-1.12zM10 8h1.12v1.12h-1.12zM12 8h1.12v1.12h-1.12zM14 8h9.12v1.12h-9.12zM28 8h1.12v1.12h-1.12zM34 8h1.12v1.12h-1.12zM38 8h1.12v1.12h-1.12zM48 8h1.12v1.12h-1.12zM50 8h1.12v1.12h-1.12zM53 8h1.12v1.12h-1.12zM56 8h1.12v1.12h-1.12zM58 8h1.12v1.12h-1.12zM63 8h1.12v1.12h-1.12zM66 8h1.12v1.12h-1.12zM69 8h1.12v1.12h-1.12zM72 8h1.12v1.12h-1.12zM4 9h1.12v1.12h-1.12zM8 9h1.12v1.12h-1.12zM10 9h1.12v1.12h-1.12zM12 9h1.12v1.12h-1.12zM16 9h1.12v1.12h-1.12zM19 9h1.12v1.12h-1.12zM22 9h1.12v1.12h-1.12zM28 9h7.12v1.12h-7.12zM41 9h5.12v1.12h-5.12zM50 9h1.12v1.12h-1.12zM53 9h1.12v1.12h-1.12zM58 9h1.12v1.12h-1.12zM63 9h1.12v1.12h-1.12zM66 9h1.12v1.12h-1.12zM69 9h1.12v1.12h-1.12zM72 9h1.12v1.12h-1.12zM4 10h1.12v1.12h-1.12zM8 10h1.12v1.12h-1.12zM10 10h1.12v1.12h-1.12zM12 10h1.12v1.12h-1.12zM16 10h7.12v1.12h-7.12zM41 10h1.12v1.12h-1.12zM45 10h1.12v1.12h-1.12zM50 10h1.12v1.12h-1.12zM53 10h1.12v1.12h-1.12zM58 10h1.12v1.12h-1.12zM63 10h1.12v1.12h-1.12zM66 10h4.12v1.12h-4.12zM72 10h1.12v1.12h-1.12zM4 11h1.12v1.12h-1.12zM9 11h1.12v1.12h-1.12zM11 11h1.12v1.12h-1.12zM16 11h1.12v1.12h-1.12zM19 11h1.12v1.12h-1.12zM22 11h1.12v1.12h-1.12zM27 11h1.12v1.12h-1.12zM29 11h1.12v1.12h-1.12zM32 11h1.12v1.12h-1.12zM35 11h1.12v1.12h-1.12zM40 11h1.12v1.12h-1.12zM45 11h1.12v1.12h-1.12zM48 11h1.12v1.12h-1.12zM50 11h4.12v1.12h-4.12zM58 11h1.12v1.12h-1.12zM63 11h1.12v1.12h-1.12zM72 11h1.12v1.12h-1.12zM3 12h2.12v1.12h-2.12zM7 12h2.12v1.12h-2.12zM12 12h1.12v1.12h-1.12zM16 12h7.12v1.12h-7.12zM26 12h1.12v1.12h-1.12zM30 12h1.12v1.12h-1.12zM33 12h1.12v1.12h-1.12zM36 12h1.12v1.12h-1.12zM38 12h2.12v1.12h-2.12zM46 12h3.12v1.12h-3.12zM56 12h3.12v1.12h-3.12zM63 12h1.12v1.12h-1.12zM70 12h3.12v1.12h-3.12z"/></svg>
<svg class="t" style="left:193.17px;top:520.60px" width="67.71" height="14.40" viewBox="0 0 74 16" preserveAspectRatio="none"><path fill="#000" d="M10 2h1.12v1.12h-1.12zM15 2h1.12v1.12h-1.12zM20 2h1.12v1.12h-1.12zM31 2h1.12v1.12h-1.12zM40 2h7.12v1.12h-7.12zM55 2h1.12v1.12h-1.12zM65 2h1.12v1.12h-1.12zM69 2h1.12v1.12h-1.12zM2 3h4.12v1.12h-4.12zM10 3h1.12v1.12h-1.12zM15 3h1.12v1.12h-1.12zM20 3h1.12v1.12h-1.12zM27 3h10.12v1.12h-10.12zM40 3h1.12v1.12h-1.12zM46 3h1.12v1.12h-1.12zM55 3h1.12v1.12h-1.12zM65 3h8.12v1.12h-8.12zM5 4h8.12v1.12h-8.12zM15 4h1.12v1.12h-1.12zM20 4h1.12v1.12h-1.12zM23 4h1.12v1.12h-1.12zM27 4h1.12v1.12h-1.12zM30 4h1.12v1.12h-1.12zM33 4h1.12v1.12h-1.12zM40 4h7.12v1.12h-7.12zM55 4h1.12v1.12h-1.12zM64 4h1.12v1.12h-1.12zM68 4h1.12v1.12h-1.12zM2 5h1.12v1.12h-1.12zM5 5h1.12v1.12h-1.12zM10 5h1.12v1.12h-1.12zM15 5h1.12v1.12h-1.12zM20 5h1.12v1.12h-1.12zM22 5h1.12v1.12h-1.12zM27 5h9.12v1.12h-9.12zM40 5h1.12v1.12h-1.12zM46 5h1.12v1.12h-1.12zM50 5h11.12v1.12h-11.12zM64 5h1.12v1.12h-1.12zM67 5h5.12v1.12h-5.12zM3 6h1.12v1.12h-1.12zM5 6h1.12v1.12h-1.12zM10 6h1.12v1.12h-1.12zM15 6h4.12v1.12h-4.12zM20 6h2.12v1.12h-2.12zM27 6h1.12v1.12h-1.12zM30 6h1.12v1.12h-1.12zM33 6h1.12v1.12h-1.12zM38 6h11.12v1.12h-11.12zM55 6h1.12v1.12h-1.12zM63 6h2.12v1.12h-2.12zM67 6h1.12v1.12h-1.12zM71 6h1.12v1.12h-1.12zM4 7h1.12v1.12h-1.12zM7 7h1.12v1.12h-1.12zM10 7h1.12v1.12h-1.12zM15 7h1.12v1.12h-1.12zM20 7h1.12v1.12h-1.12zM27 7h1.12v1.12h-1.12zM30 7h4.12v1.12h-4.12zM39 7h1.12v1.12h-1.12zM42 7h1.12v1.12h-1.12zM55 7h1.12v1.12h-1.12zM62 7h1.12v1.12h-1.12zM64 7h1.12v1.12h-1.12zM67 7h5.12v1.12h-5.12zM4 8h1.12v1.12h-1.12zM8 8h1.12v1.12h-1.12zM10 8h1.12v1.12h-1.12zM15 8h1.12v1.12h-1.12zM20 8h1.12v1.12h-1.12zM27 8h1.12v1.12h-1.12zM39 8h9.12v1.12h-9.12zM54 8h1.12v1.12h-1.12zM56 8h1.12v1.12h-1.12zM64 8h1.12v1.12h-1.12zM67 8h1.12v1.12h-1.12zM71 8h1.12v1.12h-1.12zM3 9h1.12v1.12h-1.12zM5 9h1.12v1.12h-1.12zM10 9h1.12v1.12h-1.12zM15 9h1.12v1.12h-1.12zM20 9h1.12v1.12h-1.12zM27 9h1.12v1.12h-1.12zM29 9h6.12v1.12h-6.12zM39 9h1.12v1.12h-1.12zM42 9h1.12v1.12h-1.12zM44 9h1.12v1.12h-1.12zM47 9h1.12v1.12h-1.12zM54 9h1.12v1.12h-1.12zM56 9h1.12v1.12h-1.12zM64 9h1.12v1.12h-1.12zM67 9h3.12v1.12h-3.12zM71 9h1.12v1.12h-1.12zM3 10h1.12v1.12h-1.12zM5 10h1.12v1.12h-1.12zM10 10h1.12v1.12h-1.12zM15 10h1.12v1.12h-1.12zM17 10h2.12v1.12h-2.12zM20 10h1.12v1.12h-1.12zM24 10h1.12v1.12h-1.12zM27 10h1.12v1.12h-1.12zM30 10h1.12v1.12h-1.12zM33 10h1.12v1.12h-1.12zM39 10h4.12v1.12h-4.12zM45 10h2.12v1.12h-2.12zM53 10h1.12v1.12h-1.12zM57 10h1.12v1.12h-1.12zM64 10h1.12v1.12h-1.12zM67 10h1.12v1.12h-1.12zM69 10h3.12v1.12h-3.12zM2 11h1.12v1.12h-1.12zM8 11h1.12v1.12h-1.12zM10 11h1.12v1.12h-1.12zM15 11h2.12v1.12h-2.12zM20 11h1.12v1.12h-1.12zM24 11h1.12v1.12h-1.12zM26 11h1.12v1.12h-1.12zM31 11h2.12v1.12h-2.12zM38 11h2.12v1.12h-2.12zM42 11h1.12v1.12h-1.12zM45 11h2.12v1.12h-2.12zM52 11h1.12v1.12h-1.12zM58 11h1.12v1.12h-1.12zM64 11h1.12v1.12h-1.12zM67 11h1.12v1.12h-1.12zM71 11h1.12v1.12h-1.12zM9 12h1.12v1.12h-1.12zM15 12h1.12v1.12h-1.12zM21 12h4.12v1.12h-4.12zM26 12h1.12v1.12h-1.12zM28 12h3.12v1.12h-3.12zM33 12h3.12v1.12h-3.12zM42 12h3.12v1.12h-3.12zM47 12h2.12v1.12h-2.12zM50 12h2.12v1.12h-2.12zM59 12h2.12v1.12h-2.12zM64 12h1.12v1.12h-1.12zM66 12h7.12v1.12h-7.12z"/></svg>
<div class="a" style="left:354px;top:228px;width:62px;height:28px;background:#fff"></div>
<div class="a" style="left:354px;top:228px;width:61px;height:1px;background:#808080"></div>
<div class="a" style="left:354px;top:228px;width:1px;height:27px;background:#808080"></div>
<div class="a" style="left:355px;top:229px;width:59px;height:1px;background:#404040"></div>
<div class="a" style="left:355px;top:229px;width:1px;height:25px;background:#404040"></div>
<div class="a" style="left:354px;top:255px;width:62px;height:1px;background:#fff"></div>
<div class="a" style="left:415px;top:228px;width:1px;height:28px;background:#fff"></div>
<div class="a" style="left:355px;top:254px;width:60px;height:1px;background:#d4d0c8"></div>
<div class="a" style="left:414px;top:229px;width:1px;height:26px;background:#d4d0c8"></div>
<svg class="t" style="left:406.70px;top:234.50px" width="6.30" height="14.40" viewBox="0 0 7 16" preserveAspectRatio="none"><path fill="#000" d="M2 4h3v1h-3zM1 5h1v1h-1zM5 5h1v1h-1zM1 6h1v1h-1zM5 6h1v1h-1zM1 7h1v1h-1zM5 7h1v1h-1zM1 8h1v1h-1zM5 8h1v1h-1zM1 9h1v1h-1zM5 9h1v1h-1zM1 10h1v1h-1zM5 10h1v1h-1zM2 11h3v1h-3z"/></svg>
<div class="a" style="left:416px;top:229px;width:39px;height:26px;background:#d4d0c8"></div>
<div class="a" style="left:417px;top:230px;width:37px;height:1px;background:#e4e0d8"></div>
<div class="a" style="left:417px;top:230px;width:1px;height:24px;background:#e4e0d8"></div>
<div class="a" style="left:417px;top:253px;width:37px;height:1px;background:#808080"></div>
<div class="a" style="left:453px;top:230px;width:1px;height:24px;background:#808080"></div>
<div class="a" style="left:416px;top:229px;width:39px;height:1px;background:#fff"></div>
<div class="a" style="left:416px;top:229px;width:1px;height:26px;background:#fff"></div>
<div class="a" style="left:416px;top:254px;width:39px;height:1px;background:#404040"></div>
<div class="a" style="left:454px;top:229px;width:1px;height:26px;background:#404040"></div>
<div class="a" style="left:455px;top:229px;width:40px;height:26px;background:#d4d0c8"></div>
<div class="a" style="left:456px;top:230px;width:38px;height:1px;background:#fff"></div>
<div class="a" style="left:456px;top:230px;width:1px;height:24px;background:#fff"></div>
<div class="a" style="left:456px;top:253px;width:38px;height:1px;background:#808080"></div>
<div class="a" style="left:493px;top:230px;width:1px;height:24px;background:#808080"></div>
<div class="a" style="left:455px;top:229px;width:40px;height:1px;background:#e4e0d8"></div>
<div class="a" style="left:455px;top:229px;width:1px;height:26px;background:#e4e0d8"></div>
<div class="a" style="left:455px;top:254px;width:40px;height:1px;background:#404040"></div>
<div class="a" style="left:494px;top:229px;width:1px;height:26px;background:#404040"></div>
<svg class="t" style="left:416px;top:228px" width="79" height="27"><path d="M12.6 12.8L20.2 5.8V19.7Z M63.3 12.8L55.8 5.8V19.7Z" fill="#000"/></svg>
<svg class="t" style="left:511.08px;top:235.50px" width="61.30" height="14.40" viewBox="0 0 67 16" preserveAspectRatio="none"><path fill="#000" d="M28 2h1.12v1.12h-1.12zM31 2h5.12v1.12h-5.12zM42 2h1.12v1.12h-1.12zM44 2h1.12v1.12h-1.12zM28 3h1.12v1.12h-1.12zM38 3h1.12v1.12h-1.12zM42 3h1.12v1.12h-1.12zM45 3h1.12v1.12h-1.12zM27 4h4.12v1.12h-4.12zM39 4h1.12v1.12h-1.12zM42 4h7.12v1.12h-7.12zM28 5h1.12v1.12h-1.12zM30 5h7.12v1.12h-7.12zM39 5h1.12v1.12h-1.12zM41 5h2.12v1.12h-2.12zM45 5h1.12v1.12h-1.12zM28 6h1.12v1.12h-1.12zM33 6h1.12v1.12h-1.12zM42 6h1.12v1.12h-1.12zM45 6h1.12v1.12h-1.12zM27 7h3.12v1.12h-3.12zM33 7h1.12v1.12h-1.12zM40 7h1.12v1.12h-1.12zM42 7h6.12v1.12h-6.12zM27 8h2.12v1.12h-2.12zM31 8h1.12v1.12h-1.12zM33 8h1.12v1.12h-1.12zM35 8h1.12v1.12h-1.12zM40 8h1.12v1.12h-1.12zM42 8h1.12v1.12h-1.12zM45 8h1.12v1.12h-1.12zM28 9h1.12v1.12h-1.12zM31 9h1.12v1.12h-1.12zM33 9h1.12v1.12h-1.12zM36 9h1.12v1.12h-1.12zM38 9h2.12v1.12h-2.12zM42 9h6.12v1.12h-6.12zM28 10h1.12v1.12h-1.12zM30 10h1.12v1.12h-1.12zM33 10h1.12v1.12h-1.12zM36 10h1.12v1.12h-1.12zM39 10h1.12v1.12h-1.12zM42 10h1.12v1.12h-1.12zM45 10h1.12v1.12h-1.12zM28 11h1.12v1.12h-1.12zM33 11h1.12v1.12h-1.12zM39 11h1.12v1.12h-1.12zM42 11h1.12v1.12h-1.12zM45 11h1.12v1.12h-1.12zM28 12h1.12v1.12h-1.12zM32 12h2.12v1.12h-2.12zM39 12h1.12v1.12h-1.12zM42 12h7.12v1.12h-7.12zM2 4h3v1h-3zM26 4h1v1h-1zM49 4h1v1h-1zM55 4h5v1h-5zM62 4h4v1h-4zM1 5h1v1h-1zM5 5h1v1h-1zM49 5h1v1h-1zM55 5h1v1h-1zM60 5h2v1h-2zM1 6h1v1h-1zM5 6h1v1h-1zM15 6h1v1h-1zM50 6h1v1h-1zM54 6h2v1h-2zM61 6h1v1h-1zM1 7h1v1h-1zM5 7h1v1h-1zM15 7h1v1h-1zM50 7h1v1h-1zM54 7h2v1h-2zM62 7h3v1h-3zM1 8h1v1h-1zM5 8h1v1h-1zM51 8h1v1h-1zM53 8h1v1h-1zM55 8h1v1h-1zM65 8h1v1h-1zM1 9h1v1h-1zM5 9h1v1h-1zM26 9h1v1h-1zM51 9h1v1h-1zM53 9h1v1h-1zM55 9h1v1h-1zM65 9h1v1h-1zM1 10h1v1h-1zM5 10h1v1h-1zM15 10h1v1h-1zM52 10h1v1h-1zM55 10h1v1h-1zM60 10h1v1h-1zM65 10h1v1h-1zM2 11h3v1h-3zM15 11h1v1h-1zM52 11h1v1h-1zM56 11h4v1h-4zM61 11h4v1h-4z"/></svg>
<div class="a" style="left:354px;top:269px;width:62px;height:28px;background:#fff"></div>
<div class="a" style="left:354px;top:269px;width:61px;height:1px;background:#808080"></div>
<div class="a" style="left:354px;top:269px;width:1px;height:27px;background:#808080"></div>
<div class="a" style="left:355px;top:270px;width:59px;height:1px;background:#404040"></div>
<div class="a" style="left:355px;top:270px;width:1px;height:25px;background:#404040"></div>
<div class="a" style="left:354px;top:296px;width:62px;height:1px;background:#fff"></div>
<div class="a" style="left:415px;top:269px;width:1px;height:28px;background:#fff"></div>
<div class="a" style="left:355px;top:295px;width:60px;height:1px;background:#d4d0c8"></div>
<div class="a" style="left:414px;top:270px;width:1px;height:26px;background:#d4d0c8"></div>
<svg class="t" style="left:406.70px;top:275.50px" width="6.30" height="14.40" viewBox="0 0 7 16" preserveAspectRatio="none"><path fill="#000" d="M2 4h3v1h-3zM1 5h1v1h-1zM5 5h1v1h-1zM1 6h1v1h-1zM5 6h1v1h-1zM1 7h1v1h-1zM5 7h1v1h-1zM1 8h1v1h-1zM5 8h1v1h-1zM1 9h1v1h-1zM5 9h1v1h-1zM1 10h1v1h-1zM5 10h1v1h-1zM2 11h3v1h-3z"/></svg>
<div class="a" style="left:416px;top:270px;width:39px;height:26px;background:#d4d0c8"></div>
<div class="a" style="left:417px;top:271px;width:37px;height:1px;background:#e4e0d8"></div>
<div class="a" style="left:417px;top:271px;width:1px;height:24px;background:#e4e0d8"></div>
<div class="a" style="left:417px;top:294px;width:37px;height:1px;background:#808080"></div>
<div class="a" style="left:453px;top:271px;width:1px;height:24px;background:#808080"></div>
<div class="a" style="left:416px;top:270px;width:39px;height:1px;background:#fff"></div>
<div class="a" style="left:416px;top:270px;width:1px;height:26px;background:#fff"></div>
<div class="a" style="left:416px;top:295px;width:39px;height:1px;background:#404040"></div>
<div class="a" style="left:454px;top:270px;width:1px;height:26px;background:#404040"></div>
<div class="a" style="left:455px;top:270px;width:40px;height:26px;background:#d4d0c8"></div>
<div class="a" style="left:456px;top:271px;width:38px;height:1px;background:#fff"></div>
<div class="a" style="left:456px;top:271px;width:1px;height:24px;background:#fff"></div>
<div class="a" style="left:456px;top:294px;width:38px;height:1px;background:#808080"></div>
<div class="a" style="left:493px;top:271px;width:1px;height:24px;background:#808080"></div>
<div class="a" style="left:455px;top:270px;width:40px;height:1px;background:#e4e0d8"></div>
<div class="a" style="left:455px;top:270px;width:1px;height:26px;background:#e4e0d8"></div>
<div class="a" style="left:455px;top:295px;width:40px;height:1px;background:#404040"></div>
<div class="a" style="left:494px;top:270px;width:1px;height:26px;background:#404040"></div>
<svg class="t" style="left:416px;top:269px" width="79" height="27"><path d="M12.6 12.8L20.2 5.8V19.7Z M63.3 12.8L55.8 5.8V19.7Z" fill="#000"/></svg>
<svg class="t" style="left:511.08px;top:275.70px" width="83.27" height="14.40" viewBox="0 0 91 16" preserveAspectRatio="none"><path fill="#000" d="M66 2h1.12v1.12h-1.12zM80 2h1.12v1.12h-1.12zM82 2h1.12v1.12h-1.12zM67 3h1.12v1.12h-1.12zM80 3h1.12v1.12h-1.12zM83 3h1.12v1.12h-1.12zM63 4h10.12v1.12h-10.12zM80 4h1.12v1.12h-1.12zM66 5h1.12v1.12h-1.12zM74 5h11.12v1.12h-11.12zM66 6h1.12v1.12h-1.12zM80 6h1.12v1.12h-1.12zM66 7h5.12v1.12h-5.12zM75 7h4.12v1.12h-4.12zM80 7h1.12v1.12h-1.12zM65 8h1.12v1.12h-1.12zM70 8h1.12v1.12h-1.12zM77 8h1.12v1.12h-1.12zM80 8h1.12v1.12h-1.12zM65 9h1.12v1.12h-1.12zM70 9h1.12v1.12h-1.12zM77 9h1.12v1.12h-1.12zM81 9h1.12v1.12h-1.12zM64 10h1.12v1.12h-1.12zM70 10h1.12v1.12h-1.12zM77 10h1.12v1.12h-1.12zM81 10h1.12v1.12h-1.12zM84 10h1.12v1.12h-1.12zM63 11h1.12v1.12h-1.12zM70 11h1.12v1.12h-1.12zM77 11h2.12v1.12h-2.12zM82 11h1.12v1.12h-1.12zM84 11h1.12v1.12h-1.12zM67 12h3.12v1.12h-3.12zM74 12h3.12v1.12h-3.12zM83 12h2.12v1.12h-2.12zM2 4h3v1h-3zM26 4h4v1h-4zM37 4h1v1h-1zM43 4h5v1h-5zM50 4h4v1h-4zM62 4h1v1h-1zM85 4h3v1h-3zM1 5h1v1h-1zM5 5h1v1h-1zM25 5h1v1h-1zM37 5h1v1h-1zM43 5h1v1h-1zM48 5h2v1h-2zM87 5h1v1h-1zM1 6h1v1h-1zM5 6h1v1h-1zM15 6h1v1h-1zM25 6h1v1h-1zM38 6h1v1h-1zM42 6h2v1h-2zM49 6h1v1h-1zM87 6h1v1h-1zM1 7h1v1h-1zM5 7h1v1h-1zM15 7h1v1h-1zM26 7h3v1h-3zM32 7h5v1h-5zM38 7h1v1h-1zM42 7h2v1h-2zM50 7h3v1h-3zM87 7h1v1h-1zM1 8h1v1h-1zM5 8h1v1h-1zM29 8h1v1h-1zM39 8h1v1h-1zM41 8h1v1h-1zM43 8h1v1h-1zM53 8h1v1h-1zM87 8h1v1h-1zM1 9h1v1h-1zM5 9h1v1h-1zM29 9h1v1h-1zM39 9h1v1h-1zM41 9h1v1h-1zM43 9h1v1h-1zM53 9h1v1h-1zM87 9h1v1h-1zM1 10h1v1h-1zM5 10h1v1h-1zM15 10h1v1h-1zM29 10h1v1h-1zM40 10h1v1h-1zM43 10h1v1h-1zM48 10h1v1h-1zM53 10h1v1h-1zM87 10h1v1h-1zM2 11h3v1h-3zM15 11h1v1h-1zM25 11h4v1h-4zM40 11h1v1h-1zM44 11h4v1h-4zM49 11h4v1h-4zM85 11h5v1h-5zM62 12h1v1h-1z"/></svg>
<div class="a" style="left:354px;top:310px;width:158px;height:28px;background:#fff"></div>
<div class="a" style="left:354px;top:310px;width:157px;height:1px;background:#808080"></div>
<div class="a" style="left:354px;top:310px;width:1px;height:27px;background:#808080"></div>
<div class="a" style="left:355px;top:311px;width:155px;height:1px;background:#404040"></div>
<div class="a" style="left:355px;top:311px;width:1px;height:25px;background:#404040"></div>
<div class="a" style="left:354px;top:337px;width:158px;height:1px;background:#fff"></div>
<div class="a" style="left:511px;top:310px;width:1px;height:28px;background:#fff"></div>
<div class="a" style="left:355px;top:336px;width:156px;height:1px;background:#d4d0c8"></div>
<div class="a" style="left:510px;top:311px;width:1px;height:26px;background:#d4d0c8"></div>
<div class="a" style="left:357px;top:313px;width:138px;height:23px;background:#cce0ff"></div>
<div class="a" style="left:496px;top:312px;width:15px;height:25px;background:#d4d0c8"></div>
<div class="a" style="left:497px;top:313px;width:13px;height:1px;background:#fff"></div>
<div class="a" style="left:497px;top:313px;width:1px;height:23px;background:#fff"></div>
<div class="a" style="left:497px;top:335px;width:13px;height:1px;background:#808080"></div>
<div class="a" style="left:509px;top:313px;width:1px;height:23px;background:#808080"></div>
<div class="a" style="left:496px;top:312px;width:15px;height:1px;background:#d4d0c8"></div>
<div class="a" style="left:496px;top:312px;width:1px;height:25px;background:#d4d0c8"></div>
<div class="a" style="left:496px;top:336px;width:15px;height:1px;background:#505050"></div>
<div class="a" style="left:510px;top:312px;width:1px;height:25px;background:#505050"></div>
<svg class="t" style="left:496px;top:311px" width="15" height="25"><path d="M4 11h6.2l-3.1 4.2z" fill="#000"/></svg>
<svg class="t" style="left:356.17px;top:316.60px" width="34.77" height="14.40" viewBox="0 0 38 16" preserveAspectRatio="none"><path fill="#000" d="M6 2h1.12v1.12h-1.12zM31 2h1.12v1.12h-1.12zM6 3h1.12v1.12h-1.12zM31 3h1.12v1.12h-1.12zM2 4h11.12v1.12h-11.12zM26 4h11.12v1.12h-11.12zM6 5h1.12v1.12h-1.12zM22 5h1.12v1.12h-1.12zM30 5h1.12v1.12h-1.12zM5 6h1.12v1.12h-1.12zM23 6h1.12v1.12h-1.12zM29 6h1.12v1.12h-1.12zM5 7h7.12v1.12h-7.12zM14 7h11.12v1.12h-11.12zM29 7h6.12v1.12h-6.12zM4 8h1.12v1.12h-1.12zM8 8h1.12v1.12h-1.12zM23 8h1.12v1.12h-1.12zM28 8h2.12v1.12h-2.12zM34 8h1.12v1.12h-1.12zM4 9h1.12v1.12h-1.12zM8 9h1.12v1.12h-1.12zM22 9h1.12v1.12h-1.12zM27 9h1.12v1.12h-1.12zM29 9h1.12v1.12h-1.12zM34 9h1.12v1.12h-1.12zM3 10h1.12v1.12h-1.12zM8 10h1.12v1.12h-1.12zM26 10h1.12v1.12h-1.12zM29 10h1.12v1.12h-1.12zM34 10h1.12v1.12h-1.12zM2 11h1.12v1.12h-1.12zM8 11h1.12v1.12h-1.12zM29 11h6.12v1.12h-6.12zM4 12h9.12v1.12h-9.12zM29 12h1.12v1.12h-1.12zM34 12h1.12v1.12h-1.12z"/></svg>
<div class="a" style="left:354px;top:351px;width:158px;height:28px;background:#fff"></div>
<div class="a" style="left:354px;top:351px;width:157px;height:1px;background:#808080"></div>
<div class="a" style="left:354px;top:351px;width:1px;height:27px;background:#808080"></div>
<div class="a" style="left:355px;top:352px;width:155px;height:1px;background:#404040"></div>
<div class="a" style="left:355px;top:352px;width:1px;height:25px;background:#404040"></div>
<div class="a" style="left:354px;top:378px;width:158px;height:1px;background:#fff"></div>
<div class="a" style="left:511px;top:351px;width:1px;height:28px;background:#fff"></div>
<div class="a" style="left:355px;top:377px;width:156px;height:1px;background:#d4d0c8"></div>
<div class="a" style="left:510px;top:352px;width:1px;height:26px;background:#d4d0c8"></div>
<div class="a" style="left:357px;top:354px;width:138px;height:23px;background:#cce0ff"></div>
<div class="a" style="left:496px;top:353px;width:15px;height:25px;background:#d4d0c8"></div>
<div class="a" style="left:497px;top:354px;width:13px;height:1px;background:#fff"></div>
<div class="a" style="left:497px;top:354px;width:1px;height:23px;background:#fff"></div>
<div class="a" style="left:497px;top:376px;width:13px;height:1px;background:#808080"></div>
<div class="a" style="left:509px;top:354px;width:1px;height:23px;background:#808080"></div>
<div class="a" style="left:496px;top:353px;width:15px;height:1px;background:#d4d0c8"></div>
<div class="a" style="left:496px;top:353px;width:1px;height:25px;background:#d4d0c8"></div>
<div class="a" style="left:496px;top:377px;width:15px;height:1px;background:#505050"></div>
<div class="a" style="left:510px;top:353px;width:1px;height:25px;background:#505050"></div>
<svg class="t" style="left:496px;top:352px" width="15" height="25"><path d="M4 11h6.2l-3.1 4.2z" fill="#000"/></svg>
<svg class="t" style="left:356.17px;top:357.60px" width="56.73" height="14.40" viewBox="0 0 62 16" preserveAspectRatio="none"><path fill="#000" d="M5 2h1.12v1.12h-1.12zM9 2h4.12v1.12h-4.12zM17 2h1.12v1.12h-1.12zM21 2h1.12v1.12h-1.12zM29 2h1.12v1.12h-1.12zM33 2h1.12v1.12h-1.12zM40 2h1.12v1.12h-1.12zM42 2h7.12v1.12h-7.12zM53 2h1.12v1.12h-1.12zM56 2h4.12v1.12h-4.12zM2 3h8.12v1.12h-8.12zM12 3h1.12v1.12h-1.12zM17 3h1.12v1.12h-1.12zM21 3h1.12v1.12h-1.12zM28 3h1.12v1.12h-1.12zM33 3h1.12v1.12h-1.12zM40 3h1.12v1.12h-1.12zM44 3h1.12v1.12h-1.12zM47 3h1.12v1.12h-1.12zM53 3h1.12v1.12h-1.12zM55 3h1.12v1.12h-1.12zM58 3h1.12v1.12h-1.12zM3 4h1.12v1.12h-1.12zM7 4h1.12v1.12h-1.12zM9 4h1.12v1.12h-1.12zM12 4h1.12v1.12h-1.12zM16 4h1.12v1.12h-1.12zM22 4h1.12v1.12h-1.12zM27 4h4.12v1.12h-4.12zM32 4h5.12v1.12h-5.12zM38 4h5.12v1.12h-5.12zM44 4h4.12v1.12h-4.12zM52 4h1.12v1.12h-1.12zM54 4h7.12v1.12h-7.12zM4 5h1.12v1.12h-1.12zM6 5h1.12v1.12h-1.12zM9 5h1.12v1.12h-1.12zM11 5h1.12v1.12h-1.12zM16 5h1.12v1.12h-1.12zM22 5h1.12v1.12h-1.12zM27 5h1.12v1.12h-1.12zM30 5h2.12v1.12h-2.12zM36 5h1.12v1.12h-1.12zM40 5h1.12v1.12h-1.12zM44 5h1.12v1.12h-1.12zM47 5h1.12v1.12h-1.12zM52 5h2.12v1.12h-2.12zM55 5h1.12v1.12h-1.12zM57 5h1.12v1.12h-1.12zM60 5h1.12v1.12h-1.12zM2 6h9.12v1.12h-9.12zM15 6h1.12v1.12h-1.12zM23 6h1.12v1.12h-1.12zM27 6h1.12v1.12h-1.12zM30 6h1.12v1.12h-1.12zM36 6h1.12v1.12h-1.12zM40 6h1.12v1.12h-1.12zM42 6h1.12v1.12h-1.12zM44 6h4.12v1.12h-4.12zM51 6h2.12v1.12h-2.12zM55 6h6.12v1.12h-6.12zM9 7h1.12v1.12h-1.12zM11 7h1.12v1.12h-1.12zM14 7h1.12v1.12h-1.12zM16 7h7.12v1.12h-7.12zM24 7h1.12v1.12h-1.12zM27 7h4.12v1.12h-4.12zM32 7h1.12v1.12h-1.12zM36 7h1.12v1.12h-1.12zM40 7h2.12v1.12h-2.12zM44 7h1.12v1.12h-1.12zM47 7h1.12v1.12h-1.12zM50 7h1.12v1.12h-1.12zM52 7h1.12v1.12h-1.12zM56 7h1.12v1.12h-1.12zM60 7h1.12v1.12h-1.12zM3 8h5.12v1.12h-5.12zM9 8h1.12v1.12h-1.12zM12 8h1.12v1.12h-1.12zM18 8h1.12v1.12h-1.12zM22 8h1.12v1.12h-1.12zM27 8h1.12v1.12h-1.12zM30 8h1.12v1.12h-1.12zM33 8h1.12v1.12h-1.12zM36 8h1.12v1.12h-1.12zM39 8h2.12v1.12h-2.12zM42 8h7.12v1.12h-7.12zM52 8h1.12v1.12h-1.12zM54 8h2.12v1.12h-2.12zM57 8h1.12v1.12h-1.12zM59 8h1.12v1.12h-1.12zM3 9h1.12v1.12h-1.12zM7 9h1.12v1.12h-1.12zM9 9h1.12v1.12h-1.12zM12 9h1.12v1.12h-1.12zM18 9h1.12v1.12h-1.12zM22 9h1.12v1.12h-1.12zM27 9h1.12v1.12h-1.12zM30 9h1.12v1.12h-1.12zM33 9h1.12v1.12h-1.12zM36 9h1.12v1.12h-1.12zM38 9h1.12v1.12h-1.12zM40 9h1.12v1.12h-1.12zM42 9h1.12v1.12h-1.12zM44 9h1.12v1.12h-1.12zM46 9h1.12v1.12h-1.12zM48 9h1.12v1.12h-1.12zM52 9h1.12v1.12h-1.12zM56 9h1.12v1.12h-1.12zM58 9h1.12v1.12h-1.12zM3 10h1.12v1.12h-1.12zM7 10h1.12v1.12h-1.12zM9 10h2.12v1.12h-2.12zM12 10h1.12v1.12h-1.12zM17 10h1.12v1.12h-1.12zM22 10h1.12v1.12h-1.12zM27 10h1.12v1.12h-1.12zM30 10h1.12v1.12h-1.12zM36 10h1.12v1.12h-1.12zM40 10h1.12v1.12h-1.12zM43 10h1.12v1.12h-1.12zM47 10h1.12v1.12h-1.12zM52 10h1.12v1.12h-1.12zM54 10h2.12v1.12h-2.12zM57 10h3.12v1.12h-3.12zM3 11h5.12v1.12h-5.12zM9 11h1.12v1.12h-1.12zM11 11h1.12v1.12h-1.12zM16 11h1.12v1.12h-1.12zM22 11h1.12v1.12h-1.12zM27 11h4.12v1.12h-4.12zM36 11h1.12v1.12h-1.12zM40 11h1.12v1.12h-1.12zM42 11h1.12v1.12h-1.12zM44 11h1.12v1.12h-1.12zM46 11h1.12v1.12h-1.12zM48 11h1.12v1.12h-1.12zM52 11h1.12v1.12h-1.12zM56 11h1.12v1.12h-1.12zM58 11h1.12v1.12h-1.12zM60 11h1.12v1.12h-1.12zM3 12h1.12v1.12h-1.12zM7 12h1.12v1.12h-1.12zM9 12h1.12v1.12h-1.12zM14 12h2.12v1.12h-2.12zM20 12h2.12v1.12h-2.12zM27 12h1.12v1.12h-1.12zM30 12h1.12v1.12h-1.12zM34 12h2.12v1.12h-2.12zM38 12h4.12v1.12h-4.12zM45 12h1.12v1.12h-1.12zM48 12h1.12v1.12h-1.12zM52 12h1.12v1.12h-1.12zM54 12h2.12v1.12h-2.12zM57 12h2.12v1.12h-2.12z"/></svg>
<div class="a" style="left:354px;top:391px;width:62px;height:28px;background:#fff"></div>
<div class="a" style="left:354px;top:391px;width:61px;height:1px;background:#808080"></div>
<div class="a" style="left:354px;top:391px;width:1px;height:27px;background:#808080"></div>
<div class="a" style="left:355px;top:392px;width:59px;height:1px;background:#404040"></div>
<div class="a" style="left:355px;top:392px;width:1px;height:25px;background:#404040"></div>
<div class="a" style="left:354px;top:418px;width:62px;height:1px;background:#fff"></div>
<div class="a" style="left:415px;top:391px;width:1px;height:28px;background:#fff"></div>
<div class="a" style="left:355px;top:417px;width:60px;height:1px;background:#d4d0c8"></div>
<div class="a" style="left:414px;top:392px;width:1px;height:26px;background:#d4d0c8"></div>
<svg class="t" style="left:395.90px;top:397.50px" width="17.10" height="14.40" viewBox="0 0 19 16" preserveAspectRatio="none"><path fill="#000" d="M1 4h4v1h-4zM8 4h3v1h-3zM14 4h3v1h-3zM5 5h1v1h-1zM7 5h1v1h-1zM11 5h1v1h-1zM13 5h1v1h-1zM17 5h1v1h-1zM5 6h1v1h-1zM7 6h1v1h-1zM11 6h1v1h-1zM13 6h1v1h-1zM17 6h1v1h-1zM2 7h3v1h-3zM7 7h1v1h-1zM11 7h1v1h-1zM13 7h1v1h-1zM17 7h1v1h-1zM5 8h1v1h-1zM7 8h1v1h-1zM11 8h1v1h-1zM13 8h1v1h-1zM17 8h1v1h-1zM5 9h1v1h-1zM7 9h1v1h-1zM11 9h1v1h-1zM13 9h1v1h-1zM17 9h1v1h-1zM5 10h1v1h-1zM7 10h1v1h-1zM11 10h1v1h-1zM13 10h1v1h-1zM17 10h1v1h-1zM1 11h4v1h-4zM8 11h3v1h-3zM14 11h3v1h-3z"/></svg>
<svg class="t" style="left:509.25px;top:398.10px" width="78.69" height="14.40" viewBox="0 0 86 16" preserveAspectRatio="none"><path fill="#000" d="M3 2h10.12v1.12h-10.12zM17 2h1.12v1.12h-1.12zM20 2h4.12v1.12h-4.12zM29 2h1.12v1.12h-1.12zM31 2h5.12v1.12h-5.12zM42 2h1.12v1.12h-1.12zM52 2h1.12v1.12h-1.12zM57 2h1.12v1.12h-1.12zM67 2h1.12v1.12h-1.12zM76 2h1.12v1.12h-1.12zM80 2h1.12v1.12h-1.12zM82 2h1.12v1.12h-1.12zM3 3h1.12v1.12h-1.12zM6 3h1.12v1.12h-1.12zM12 3h1.12v1.12h-1.12zM17 3h1.12v1.12h-1.12zM19 3h1.12v1.12h-1.12zM22 3h1.12v1.12h-1.12zM29 3h1.12v1.12h-1.12zM31 3h1.12v1.12h-1.12zM35 3h1.12v1.12h-1.12zM38 3h11.12v1.12h-11.12zM52 3h1.12v1.12h-1.12zM57 3h1.12v1.12h-1.12zM62 3h11.12v1.12h-11.12zM76 3h1.12v1.12h-1.12zM80 3h1.12v1.12h-1.12zM83 3h1.12v1.12h-1.12zM3 4h1.12v1.12h-1.12zM6 4h5.12v1.12h-5.12zM12 4h1.12v1.12h-1.12zM16 4h1.12v1.12h-1.12zM18 4h7.12v1.12h-7.12zM28 4h1.12v1.12h-1.12zM31 4h1.12v1.12h-1.12zM35 4h1.12v1.12h-1.12zM41 4h1.12v1.12h-1.12zM51 4h1.12v1.12h-1.12zM54 4h7.12v1.12h-7.12zM67 4h1.12v1.12h-1.12zM75 4h1.12v1.12h-1.12zM80 4h4.12v1.12h-4.12zM3 5h1.12v1.12h-1.12zM5 5h2.12v1.12h-2.12zM9 5h1.12v1.12h-1.12zM12 5h1.12v1.12h-1.12zM16 5h2.12v1.12h-2.12zM19 5h1.12v1.12h-1.12zM21 5h1.12v1.12h-1.12zM24 5h1.12v1.12h-1.12zM28 5h1.12v1.12h-1.12zM31 5h5.12v1.12h-5.12zM40 5h1.12v1.12h-1.12zM42 5h6.12v1.12h-6.12zM51 5h1.12v1.12h-1.12zM53 5h1.12v1.12h-1.12zM57 5h1.12v1.12h-1.12zM64 5h7.12v1.12h-7.12zM75 5h1.12v1.12h-1.12zM78 5h3.12v1.12h-3.12zM3 6h2.12v1.12h-2.12zM7 6h2.12v1.12h-2.12zM12 6h1.12v1.12h-1.12zM15 6h2.12v1.12h-2.12zM19 6h6.12v1.12h-6.12zM27 6h2.12v1.12h-2.12zM33 6h1.12v1.12h-1.12zM40 6h1.12v1.12h-1.12zM46 6h1.12v1.12h-1.12zM50 6h3.12v1.12h-3.12zM55 6h5.12v1.12h-5.12zM64 6h1.12v1.12h-1.12zM67 6h1.12v1.12h-1.12zM70 6h1.12v1.12h-1.12zM74 6h3.12v1.12h-3.12zM80 6h5.12v1.12h-5.12zM3 7h1.12v1.12h-1.12zM6 7h1.12v1.12h-1.12zM9 7h1.12v1.12h-1.12zM12 7h1.12v1.12h-1.12zM14 7h1.12v1.12h-1.12zM16 7h1.12v1.12h-1.12zM20 7h1.12v1.12h-1.12zM24 7h1.12v1.12h-1.12zM26 7h1.12v1.12h-1.12zM28 7h1.12v1.12h-1.12zM30 7h7.12v1.12h-7.12zM39 7h2.12v1.12h-2.12zM45 7h1.12v1.12h-1.12zM52 7h1.12v1.12h-1.12zM64 7h1.12v1.12h-1.12zM67 7h1.12v1.12h-1.12zM70 7h1.12v1.12h-1.12zM76 7h1.12v1.12h-1.12zM78 7h3.12v1.12h-3.12zM3 8h3.12v1.12h-3.12zM7 8h1.12v1.12h-1.12zM10 8h3.12v1.12h-3.12zM16 8h1.12v1.12h-1.12zM18 8h2.12v1.12h-2.12zM21 8h1.12v1.12h-1.12zM23 8h1.12v1.12h-1.12zM28 8h1.12v1.12h-1.12zM33 8h1.12v1.12h-1.12zM38 8h1.12v1.12h-1.12zM40 8h9.12v1.12h-9.12zM51 8h1.12v1.12h-1.12zM55 8h5.12v1.12h-5.12zM64 8h7.12v1.12h-7.12zM75 8h1.12v1.12h-1.12zM80 8h1.12v1.12h-1.12zM83 8h1.12v1.12h-1.12zM3 9h1.12v1.12h-1.12zM8 9h1.12v1.12h-1.12zM12 9h1.12v1.12h-1.12zM16 9h1.12v1.12h-1.12zM20 9h1.12v1.12h-1.12zM22 9h1.12v1.12h-1.12zM28 9h1.12v1.12h-1.12zM32 9h3.12v1.12h-3.12zM40 9h1.12v1.12h-1.12zM45 9h1.12v1.12h-1.12zM50 9h4.12v1.12h-4.12zM55 9h1.12v1.12h-1.12zM59 9h1.12v1.12h-1.12zM66 9h3.12v1.12h-3.12zM74 9h4.12v1.12h-4.12zM80 9h1.12v1.12h-1.12zM82 9h1.12v1.12h-1.12zM3 10h1.12v1.12h-1.12zM7 10h1.12v1.12h-1.12zM12 10h1.12v1.12h-1.12zM16 10h1.12v1.12h-1.12zM18 10h2.12v1.12h-2.12zM21 10h3.12v1.12h-3.12zM28 10h1.12v1.12h-1.12zM31 10h1.12v1.12h-1.12zM33 10h1.12v1.12h-1.12zM35 10h1.12v1.12h-1.12zM40 10h1.12v1.12h-1.12zM45 10h1.12v1.12h-1.12zM54 10h2.12v1.12h-2.12zM59 10h1.12v1.12h-1.12zM65 10h1.12v1.12h-1.12zM67 10h1.12v1.12h-1.12zM69 10h1.12v1.12h-1.12zM78 10h1.12v1.12h-1.12zM81 10h1.12v1.12h-1.12zM84 10h1.12v1.12h-1.12zM3 11h1.12v1.12h-1.12zM8 11h1.12v1.12h-1.12zM12 11h1.12v1.12h-1.12zM16 11h1.12v1.12h-1.12zM20 11h1.12v1.12h-1.12zM22 11h1.12v1.12h-1.12zM24 11h1.12v1.12h-1.12zM28 11h1.12v1.12h-1.12zM30 11h1.12v1.12h-1.12zM33 11h1.12v1.12h-1.12zM36 11h1.12v1.12h-1.12zM40 11h1.12v1.12h-1.12zM45 11h1.12v1.12h-1.12zM52 11h2.12v1.12h-2.12zM55 11h5.12v1.12h-5.12zM64 11h1.12v1.12h-1.12zM67 11h1.12v1.12h-1.12zM70 11h1.12v1.12h-1.12zM76 11h2.12v1.12h-2.12zM80 11h1.12v1.12h-1.12zM82 11h1.12v1.12h-1.12zM84 11h1.12v1.12h-1.12zM3 12h10.12v1.12h-10.12zM16 12h1.12v1.12h-1.12zM18 12h2.12v1.12h-2.12zM21 12h2.12v1.12h-2.12zM28 12h1.12v1.12h-1.12zM33 12h1.12v1.12h-1.12zM40 12h1.12v1.12h-1.12zM43 12h3.12v1.12h-3.12zM50 12h2.12v1.12h-2.12zM55 12h1.12v1.12h-1.12zM59 12h1.12v1.12h-1.12zM62 12h2.12v1.12h-2.12zM67 12h1.12v1.12h-1.12zM71 12h2.12v1.12h-2.12zM74 12h2.12v1.12h-2.12zM78 12h2.12v1.12h-2.12zM83 12h2.12v1.12h-2.12z"/></svg>
<div class="a" style="left:671px;top:391px;width:62px;height:28px;background:#fff"></div>
<div class="a" style="left:671px;top:391px;width:61px;height:1px;background:#808080"></div>
<div class="a" style="left:671px;top:391px;width:1px;height:27px;background:#808080"></div>
<div class="a" style="left:672px;top:392px;width:59px;height:1px;background:#404040"></div>
<div class="a" style="left:672px;top:392px;width:1px;height:25px;background:#404040"></div>
<div class="a" style="left:671px;top:418px;width:62px;height:1px;background:#fff"></div>
<div class="a" style="left:732px;top:391px;width:1px;height:28px;background:#fff"></div>
<div class="a" style="left:672px;top:417px;width:60px;height:1px;background:#d4d0c8"></div>
<div class="a" style="left:731px;top:392px;width:1px;height:26px;background:#d4d0c8"></div>
<svg class="t" style="left:712.90px;top:397.50px" width="17.10" height="14.40" viewBox="0 0 19 16" preserveAspectRatio="none"><path fill="#000" d="M2 4h3v1h-3zM7 4h4v1h-4zM14 4h3v1h-3zM1 5h1v1h-1zM7 5h1v1h-1zM13 5h1v1h-1zM17 5h1v1h-1zM1 6h1v1h-1zM7 6h1v1h-1zM13 6h1v1h-1zM17 6h1v1h-1zM1 7h4v1h-4zM7 7h4v1h-4zM13 7h1v1h-1zM17 7h1v1h-1zM1 8h1v1h-1zM5 8h1v1h-1zM11 8h1v1h-1zM14 8h4v1h-4zM1 9h1v1h-1zM5 9h1v1h-1zM11 9h1v1h-1zM17 9h1v1h-1zM1 10h1v1h-1zM5 10h1v1h-1zM11 10h1v1h-1zM13 10h1v1h-1zM17 10h1v1h-1zM2 11h3v1h-3zM7 11h4v1h-4zM14 11h3v1h-3z"/></svg>
<div class="a" style="left:354px;top:432px;width:62px;height:28px;background:#fff"></div>
<div class="a" style="left:354px;top:432px;width:61px;height:1px;background:#808080"></div>
<div class="a" style="left:354px;top:432px;width:1px;height:27px;background:#808080"></div>
<div class="a" style="left:355px;top:433px;width:59px;height:1px;background:#404040"></div>
<div class="a" style="left:355px;top:433px;width:1px;height:25px;background:#404040"></div>
<div class="a" style="left:354px;top:459px;width:62px;height:1px;background:#fff"></div>
<div class="a" style="left:415px;top:432px;width:1px;height:28px;background:#fff"></div>
<div class="a" style="left:355px;top:458px;width:60px;height:1px;background:#d4d0c8"></div>
<div class="a" style="left:414px;top:433px;width:1px;height:26px;background:#d4d0c8"></div>
<svg class="t" style="left:379.70px;top:438.50px" width="33.30" height="14.40" viewBox="0 0 37 16" preserveAspectRatio="none"><path fill="#000" d="M1 4h3v1h-3zM8 4h3v1h-3zM14 4h3v1h-3zM20 4h3v1h-3zM26 4h3v1h-3zM32 4h3v1h-3zM3 5h1v1h-1zM7 5h1v1h-1zM11 5h1v1h-1zM13 5h1v1h-1zM17 5h1v1h-1zM19 5h1v1h-1zM23 5h1v1h-1zM25 5h1v1h-1zM29 5h1v1h-1zM31 5h1v1h-1zM35 5h1v1h-1zM3 6h1v1h-1zM7 6h1v1h-1zM11 6h1v1h-1zM13 6h1v1h-1zM17 6h1v1h-1zM19 6h1v1h-1zM23 6h1v1h-1zM25 6h1v1h-1zM29 6h1v1h-1zM31 6h1v1h-1zM35 6h1v1h-1zM3 7h1v1h-1zM7 7h1v1h-1zM11 7h1v1h-1zM13 7h1v1h-1zM17 7h1v1h-1zM19 7h1v1h-1zM23 7h1v1h-1zM25 7h1v1h-1zM29 7h1v1h-1zM31 7h1v1h-1zM35 7h1v1h-1zM3 8h1v1h-1zM7 8h1v1h-1zM11 8h1v1h-1zM13 8h1v1h-1zM17 8h1v1h-1zM19 8h1v1h-1zM23 8h1v1h-1zM25 8h1v1h-1zM29 8h1v1h-1zM31 8h1v1h-1zM35 8h1v1h-1zM3 9h1v1h-1zM7 9h1v1h-1zM11 9h1v1h-1zM13 9h1v1h-1zM17 9h1v1h-1zM19 9h1v1h-1zM23 9h1v1h-1zM25 9h1v1h-1zM29 9h1v1h-1zM31 9h1v1h-1zM35 9h1v1h-1zM3 10h1v1h-1zM7 10h1v1h-1zM11 10h1v1h-1zM13 10h1v1h-1zM17 10h1v1h-1zM19 10h1v1h-1zM23 10h1v1h-1zM25 10h1v1h-1zM29 10h1v1h-1zM31 10h1v1h-1zM35 10h1v1h-1zM1 11h5v1h-5zM8 11h3v1h-3zM14 11h3v1h-3zM20 11h3v1h-3zM26 11h3v1h-3zM32 11h3v1h-3z"/></svg>
<div class="a" style="left:354px;top:473px;width:62px;height:28px;background:#fff"></div>
<div class="a" style="left:354px;top:473px;width:61px;height:1px;background:#808080"></div>
<div class="a" style="left:354px;top:473px;width:1px;height:27px;background:#808080"></div>
<div class="a" style="left:355px;top:474px;width:59px;height:1px;background:#404040"></div>
<div class="a" style="left:355px;top:474px;width:1px;height:25px;background:#404040"></div>
<div class="a" style="left:354px;top:500px;width:62px;height:1px;background:#fff"></div>
<div class="a" style="left:415px;top:473px;width:1px;height:28px;background:#fff"></div>
<div class="a" style="left:355px;top:499px;width:60px;height:1px;background:#d4d0c8"></div>
<div class="a" style="left:414px;top:474px;width:1px;height:26px;background:#d4d0c8"></div>
<svg class="t" style="left:401.30px;top:479.50px" width="11.70" height="14.40" viewBox="0 0 13 16" preserveAspectRatio="none"><path fill="#000" d="M4 4h2v1h-2zM7 4h4v1h-4zM3 5h1v1h-1zM5 5h1v1h-1zM7 5h1v1h-1zM2 6h1v1h-1zM5 6h1v1h-1zM7 6h1v1h-1zM2 7h1v1h-1zM5 7h1v1h-1zM7 7h4v1h-4zM1 8h1v1h-1zM5 8h1v1h-1zM11 8h1v1h-1zM1 9h6v1h-6zM11 9h1v1h-1zM5 10h1v1h-1zM11 10h1v1h-1zM5 11h1v1h-1zM7 11h4v1h-4z"/></svg>
<svg class="t" style="left:510.17px;top:480.10px" width="67.71" height="14.40" viewBox="0 0 74 16" preserveAspectRatio="none"><path fill="#000" d="M2 2h5.12v1.12h-5.12zM8 2h5.12v1.12h-5.12zM17 2h1.12v1.12h-1.12zM31 2h1.12v1.12h-1.12zM43 2h1.12v1.12h-1.12zM52 2h1.12v1.12h-1.12zM55 2h6.12v1.12h-6.12zM62 2h3.12v1.12h-3.12zM66 2h7.12v1.12h-7.12zM5 3h1.12v1.12h-1.12zM10 3h1.12v1.12h-1.12zM17 3h6.12v1.12h-6.12zM31 3h1.12v1.12h-1.12zM38 3h11.12v1.12h-11.12zM53 3h1.12v1.12h-1.12zM60 3h1.12v1.12h-1.12zM62 3h1.12v1.12h-1.12zM64 3h1.12v1.12h-1.12zM67 3h1.12v1.12h-1.12zM71 3h1.12v1.12h-1.12zM3 4h2.12v1.12h-2.12zM8 4h5.12v1.12h-5.12zM16 4h2.12v1.12h-2.12zM21 4h1.12v1.12h-1.12zM31 4h5.12v1.12h-5.12zM41 4h1.12v1.12h-1.12zM45 4h1.12v1.12h-1.12zM51 4h1.12v1.12h-1.12zM60 4h1.12v1.12h-1.12zM62 4h1.12v1.12h-1.12zM64 4h1.12v1.12h-1.12zM67 4h5.12v1.12h-5.12zM4 5h1.12v1.12h-1.12zM8 5h1.12v1.12h-1.12zM12 5h1.12v1.12h-1.12zM15 5h1.12v1.12h-1.12zM18 5h3.12v1.12h-3.12zM31 5h1.12v1.12h-1.12zM41 5h5.12v1.12h-5.12zM51 5h1.12v1.12h-1.12zM54 5h4.12v1.12h-4.12zM60 5h1.12v1.12h-1.12zM62 5h2.12v1.12h-2.12zM2 6h5.12v1.12h-5.12zM8 6h1.12v1.12h-1.12zM10 6h1.12v1.12h-1.12zM12 6h1.12v1.12h-1.12zM18 6h1.12v1.12h-1.12zM20 6h2.12v1.12h-2.12zM28 6h7.12v1.12h-7.12zM51 6h1.12v1.12h-1.12zM54 6h1.12v1.12h-1.12zM57 6h1.12v1.12h-1.12zM60 6h1.12v1.12h-1.12zM62 6h1.12v1.12h-1.12zM64 6h1.12v1.12h-1.12zM66 6h7.12v1.12h-7.12zM4 7h1.12v1.12h-1.12zM6 7h1.12v1.12h-1.12zM8 7h1.12v1.12h-1.12zM10 7h1.12v1.12h-1.12zM12 7h1.12v1.12h-1.12zM16 7h2.12v1.12h-2.12zM22 7h3.12v1.12h-3.12zM28 7h1.12v1.12h-1.12zM34 7h1.12v1.12h-1.12zM38 7h11.12v1.12h-11.12zM51 7h1.12v1.12h-1.12zM54 7h4.12v1.12h-4.12zM60 7h1.12v1.12h-1.12zM62 7h1.12v1.12h-1.12zM64 7h1.12v1.12h-1.12zM66 7h1.12v1.12h-1.12zM68 7h1.12v1.12h-1.12zM70 7h1.12v1.12h-1.12zM72 7h1.12v1.12h-1.12zM4 8h1.12v1.12h-1.12zM8 8h1.12v1.12h-1.12zM10 8h1.12v1.12h-1.12zM12 8h1.12v1.12h-1.12zM14 8h9.12v1.12h-9.12zM28 8h1.12v1.12h-1.12zM34 8h1.12v1.12h-1.12zM38 8h1.12v1.12h-1.12zM48 8h1.12v1.12h-1.12zM51 8h1.12v1.12h-1.12zM54 8h1.12v1.12h-1.12zM57 8h1.12v1.12h-1.12zM60 8h1.12v1.12h-1.12zM62 8h1.12v1.12h-1.12zM64 8h1.12v1.12h-1.12zM66 8h1.12v1.12h-1.12zM69 8h1.12v1.12h-1.12zM72 8h1.12v1.12h-1.12zM4 9h1.12v1.12h-1.12zM8 9h1.12v1.12h-1.12zM10 9h1.12v1.12h-1.12zM12 9h1.12v1.12h-1.12zM16 9h1.12v1.12h-1.12zM19 9h1.12v1.12h-1.12zM22 9h1.12v1.12h-1.12zM28 9h7.12v1.12h-7.12zM41 9h5.12v1.12h-5.12zM51 9h1.12v1.12h-1.12zM54 9h1.12v1.12h-1.12zM57 9h1.12v1.12h-1.12zM60 9h1.12v1.12h-1.12zM62 9h1.12v1.12h-1.12zM64 9h1.12v1.12h-1.12zM66 9h7.12v1.12h-7.12zM4 10h1.12v1.12h-1.12zM8 10h1.12v1.12h-1.12zM10 10h1.12v1.12h-1.12zM12 10h1.12v1.12h-1.12zM16 10h7.12v1.12h-7.12zM41 10h1.12v1.12h-1.12zM45 10h1.12v1.12h-1.12zM51 10h1.12v1.12h-1.12zM54 10h4.12v1.12h-4.12zM60 10h1.12v1.12h-1.12zM62 10h3.12v1.12h-3.12zM66 10h1.12v1.12h-1.12zM69 10h1.12v1.12h-1.12zM72 10h1.12v1.12h-1.12zM4 11h1.12v1.12h-1.12zM9 11h1.12v1.12h-1.12zM11 11h1.12v1.12h-1.12zM16 11h1.12v1.12h-1.12zM19 11h1.12v1.12h-1.12zM22 11h1.12v1.12h-1.12zM27 11h1.12v1.12h-1.12zM29 11h1.12v1.12h-1.12zM32 11h1.12v1.12h-1.12zM35 11h1.12v1.12h-1.12zM40 11h1.12v1.12h-1.12zM45 11h1.12v1.12h-1.12zM48 11h1.12v1.12h-1.12zM51 11h1.12v1.12h-1.12zM60 11h1.12v1.12h-1.12zM62 11h1.12v1.12h-1.12zM66 11h1.12v1.12h-1.12zM69 11h1.12v1.12h-1.12zM72 11h1.12v1.12h-1.12zM3 12h2.12v1.12h-2.12zM7 12h2.12v1.12h-2.12zM12 12h1.12v1.12h-1.12zM16 12h7.12v1.12h-7.12zM26 12h1.12v1.12h-1.12zM30 12h1.12v1.12h-1.12zM33 12h1.12v1.12h-1.12zM36 12h1.12v1.12h-1.12zM38 12h2.12v1.12h-2.12zM46 12h3.12v1.12h-3.12zM51 12h1.12v1.12h-1.12zM58 12h3.12v1.12h-3.12zM62 12h1.12v1.12h-1.12zM66 12h1.12v1.12h-1.12zM71 12h2.12v1.12h-2.12z"/></svg>
<div class="a" style="left:671px;top:473px;width:62px;height:28px;background:#fff"></div>
<div class="a" style="left:671px;top:473px;width:61px;height:1px;background:#808080"></div>
<div class="a" style="left:671px;top:473px;width:1px;height:27px;background:#808080"></div>
<div class="a" style="left:672px;top:474px;width:59px;height:1px;background:#404040"></div>
<div class="a" style="left:672px;top:474px;width:1px;height:25px;background:#404040"></div>
<div class="a" style="left:671px;top:500px;width:62px;height:1px;background:#fff"></div>
<div class="a" style="left:732px;top:473px;width:1px;height:28px;background:#fff"></div>
<div class="a" style="left:672px;top:499px;width:60px;height:1px;background:#d4d0c8"></div>
<div class="a" style="left:731px;top:474px;width:1px;height:26px;background:#d4d0c8"></div>
<svg class="t" style="left:718.30px;top:479.50px" width="11.70" height="14.40" viewBox="0 0 13 16" preserveAspectRatio="none"><path fill="#000" d="M1 4h3v1h-3zM7 4h4v1h-4zM3 5h1v1h-1zM11 5h1v1h-1zM3 6h1v1h-1zM11 6h1v1h-1zM3 7h1v1h-1zM8 7h3v1h-3zM3 8h1v1h-1zM11 8h1v1h-1zM3 9h1v1h-1zM11 9h1v1h-1zM3 10h1v1h-1zM11 10h1v1h-1zM1 11h5v1h-5zM7 11h4v1h-4z"/></svg>
<div class="a" style="left:354px;top:513px;width:62px;height:28px;background:#fff"></div>
<div class="a" style="left:354px;top:513px;width:61px;height:1px;background:#808080"></div>
<div class="a" style="left:354px;top:513px;width:1px;height:27px;background:#808080"></div>
<div class="a" style="left:355px;top:514px;width:59px;height:1px;background:#404040"></div>
<div class="a" style="left:355px;top:514px;width:1px;height:25px;background:#404040"></div>
<div class="a" style="left:354px;top:540px;width:62px;height:1px;background:#fff"></div>
<div class="a" style="left:415px;top:513px;width:1px;height:28px;background:#fff"></div>
<div class="a" style="left:355px;top:539px;width:60px;height:1px;background:#d4d0c8"></div>
<div class="a" style="left:414px;top:514px;width:1px;height:26px;background:#d4d0c8"></div>
<svg class="t" style="left:401.30px;top:519.50px" width="11.70" height="14.40" viewBox="0 0 13 16" preserveAspectRatio="none"><path fill="#000" d="M1 4h4v1h-4zM8 4h3v1h-3zM5 5h1v1h-1zM7 5h1v1h-1zM11 5h1v1h-1zM5 6h1v1h-1zM7 6h1v1h-1zM11 6h1v1h-1zM2 7h3v1h-3zM7 7h1v1h-1zM11 7h1v1h-1zM5 8h1v1h-1zM7 8h1v1h-1zM11 8h1v1h-1zM5 9h1v1h-1zM7 9h1v1h-1zM11 9h1v1h-1zM5 10h1v1h-1zM7 10h1v1h-1zM11 10h1v1h-1zM1 11h4v1h-4zM8 11h3v1h-3z"/></svg>
<svg class="t" style="left:510.17px;top:520.60px" width="67.71" height="14.40" viewBox="0 0 74 16" preserveAspectRatio="none"><path fill="#000" d="M10 2h1.12v1.12h-1.12zM15 2h1.12v1.12h-1.12zM20 2h1.12v1.12h-1.12zM31 2h1.12v1.12h-1.12zM40 2h7.12v1.12h-7.12zM55 2h1.12v1.12h-1.12zM65 2h1.12v1.12h-1.12zM69 2h1.12v1.12h-1.12zM2 3h4.12v1.12h-4.12zM10 3h1.12v1.12h-1.12zM15 3h1.12v1.12h-1.12zM20 3h1.12v1.12h-1.12zM27 3h10.12v1.12h-10.12zM40 3h1.12v1.12h-1.12zM46 3h1.12v1.12h-1.12zM55 3h1.12v1.12h-1.12zM65 3h8.12v1.12h-8.12zM5 4h8.12v1.12h-8.12zM15 4h1.12v1.12h-1.12zM20 4h1.12v1.12h-1.12zM23 4h1.12v1.12h-1.12zM27 4h1.12v1.12h-1.12zM30 4h1.12v1.12h-1.12zM33 4h1.12v1.12h-1.12zM40 4h7.12v1.12h-7.12zM55 4h1.12v1.12h-1.12zM64 4h1.12v1.12h-1.12zM68 4h1.12v1.12h-1.12zM2 5h1.12v1.12h-1.12zM5 5h1.12v1.12h-1.12zM10 5h1.12v1.12h-1.12zM15 5h1.12v1.12h-1.12zM20 5h1.12v1.12h-1.12zM22 5h1.12v1.12h-1.12zM27 5h9.12v1.12h-9.12zM40 5h1.12v1.12h-1.12zM46 5h1.12v1.12h-1.12zM52 5h1.12v1.12h-1.12zM55 5h1.12v1.12h-1.12zM58 5h1.12v1.12h-1.12zM64 5h1.12v1.12h-1.12zM67 5h5.12v1.12h-5.12zM3 6h1.12v1.12h-1.12zM5 6h1.12v1.12h-1.12zM10 6h1.12v1.12h-1.12zM15 6h4.12v1.12h-4.12zM20 6h2.12v1.12h-2.12zM27 6h1.12v1.12h-1.12zM30 6h1.12v1.12h-1.12zM33 6h1.12v1.12h-1.12zM38 6h11.12v1.12h-11.12zM52 6h1.12v1.12h-1.12zM55 6h1.12v1.12h-1.12zM59 6h1.12v1.12h-1.12zM63 6h2.12v1.12h-2.12zM67 6h1.12v1.12h-1.12zM71 6h1.12v1.12h-1.12zM4 7h1.12v1.12h-1.12zM7 7h1.12v1.12h-1.12zM10 7h1.12v1.12h-1.12zM15 7h1.12v1.12h-1.12zM20 7h1.12v1.12h-1.12zM27 7h1.12v1.12h-1.12zM30 7h4.12v1.12h-4.12zM39 7h1.12v1.12h-1.12zM42 7h1.12v1.12h-1.12zM51 7h1.12v1.12h-1.12zM55 7h1.12v1.12h-1.12zM59 7h1.12v1.12h-1.12zM62 7h1.12v1.12h-1.12zM64 7h1.12v1.12h-1.12zM67 7h5.12v1.12h-5.12zM4 8h1.12v1.12h-1.12zM8 8h1.12v1.12h-1.12zM10 8h1.12v1.12h-1.12zM15 8h1.12v1.12h-1.12zM20 8h1.12v1.12h-1.12zM27 8h1.12v1.12h-1.12zM39 8h9.12v1.12h-9.12zM51 8h1.12v1.12h-1.12zM55 8h1.12v1.12h-1.12zM60 8h1.12v1.12h-1.12zM64 8h1.12v1.12h-1.12zM67 8h1.12v1.12h-1.12zM71 8h1.12v1.12h-1.12zM3 9h1.12v1.12h-1.12zM5 9h1.12v1.12h-1.12zM10 9h1.12v1.12h-1.12zM15 9h1.12v1.12h-1.12zM20 9h1.12v1.12h-1.12zM27 9h1.12v1.12h-1.12zM29 9h6.12v1.12h-6.12zM39 9h1.12v1.12h-1.12zM42 9h1.12v1.12h-1.12zM44 9h1.12v1.12h-1.12zM47 9h1.12v1.12h-1.12zM50 9h1.12v1.12h-1.12zM55 9h1.12v1.12h-1.12zM60 9h1.12v1.12h-1.12zM64 9h1.12v1.12h-1.12zM67 9h3.12v1.12h-3.12zM71 9h1.12v1.12h-1.12zM3 10h1.12v1.12h-1.12zM5 10h1.12v1.12h-1.12zM10 10h1.12v1.12h-1.12zM15 10h1.12v1.12h-1.12zM17 10h2.12v1.12h-2.12zM20 10h1.12v1.12h-1.12zM24 10h1.12v1.12h-1.12zM27 10h1.12v1.12h-1.12zM30 10h1.12v1.12h-1.12zM33 10h1.12v1.12h-1.12zM39 10h4.12v1.12h-4.12zM45 10h2.12v1.12h-2.12zM55 10h1.12v1.12h-1.12zM64 10h1.12v1.12h-1.12zM67 10h1.12v1.12h-1.12zM69 10h3.12v1.12h-3.12zM2 11h1.12v1.12h-1.12zM8 11h1.12v1.12h-1.12zM10 11h1.12v1.12h-1.12zM15 11h2.12v1.12h-2.12zM20 11h1.12v1.12h-1.12zM24 11h1.12v1.12h-1.12zM26 11h1.12v1.12h-1.12zM31 11h2.12v1.12h-2.12zM38 11h2.12v1.12h-2.12zM42 11h1.12v1.12h-1.12zM45 11h2.12v1.12h-2.12zM53 11h1.12v1.12h-1.12zM55 11h1.12v1.12h-1.12zM64 11h1.12v1.12h-1.12zM67 11h1.12v1.12h-1.12zM71 11h1.12v1.12h-1.12zM9 12h1.12v1.12h-1.12zM15 12h1.12v1.12h-1.12zM21 12h4.12v1.12h-4.12zM26 12h1.12v1.12h-1.12zM28 12h3.12v1.12h-3.12zM33 12h3.12v1.12h-3.12zM42 12h3.12v1.12h-3.12zM47 12h2.12v1.12h-2.12zM54 12h1.12v1.12h-1.12zM64 12h1.12v1.12h-1.12zM66 12h7.12v1.12h-7.12z"/></svg>
<div class="a" style="left:671px;top:513px;width:62px;height:28px;background:#fff"></div>
<div class="a" style="left:671px;top:513px;width:61px;height:1px;background:#808080"></div>
<div class="a" style="left:671px;top:513px;width:1px;height:27px;background:#808080"></div>
<div class="a" style="left:672px;top:514px;width:59px;height:1px;background:#404040"></div>
<div class="a" style="left:672px;top:514px;width:1px;height:25px;background:#404040"></div>
<div class="a" style="left:671px;top:540px;width:62px;height:1px;background:#fff"></div>
<div class="a" style="left:732px;top:513px;width:1px;height:28px;background:#fff"></div>
<div class="a" style="left:672px;top:539px;width:60px;height:1px;background:#d4d0c8"></div>
<div class="a" style="left:731px;top:514px;width:1px;height:26px;background:#d4d0c8"></div>
<svg class="t" style="left:718.30px;top:519.50px" width="11.70" height="14.40" viewBox="0 0 13 16" preserveAspectRatio="none"><path fill="#000" d="M1 4h3v1h-3zM8 4h3v1h-3zM3 5h1v1h-1zM7 5h1v1h-1zM11 5h1v1h-1zM3 6h1v1h-1zM11 6h1v1h-1zM3 7h1v1h-1zM11 7h1v1h-1zM3 8h1v1h-1zM10 8h1v1h-1zM3 9h1v1h-1zM9 9h1v1h-1zM3 10h1v1h-1zM8 10h1v1h-1zM1 11h5v1h-5zM7 11h5v1h-5z"/></svg>
<div class="a" style="left:164px;top:568px;width:712px;height:1px;background:#808080"></div>
<div class="a" style="left:164px;top:568px;width:1px;height:102px;background:#808080"></div>
<div class="a" style="left:165px;top:569px;width:710px;height:1px;background:#fff"></div>
<div class="a" style="left:165px;top:569px;width:1px;height:100px;background:#fff"></div>
<div class="a" style="left:164px;top:669px;width:712px;height:1px;background:#808080"></div>
<div class="a" style="left:875px;top:568px;width:1px;height:102px;background:#808080"></div>
<div class="a" style="left:164px;top:670px;width:713px;height:1px;background:#fff"></div>
<div class="a" style="left:876px;top:568px;width:1px;height:103px;background:#fff"></div>
<svg class="t" style="left:193.17px;top:588.00px" width="45.75" height="14.40" viewBox="0 0 50 16" preserveAspectRatio="none"><path fill="#000" d="M4 2h1.12v1.12h-1.12zM16 2h1.12v1.12h-1.12zM20 2h1.12v1.12h-1.12zM22 2h1.12v1.12h-1.12zM27 2h1.12v1.12h-1.12zM33 2h1.12v1.12h-1.12zM43 2h1.12v1.12h-1.12zM4 3h1.12v1.12h-1.12zM7 3h6.12v1.12h-6.12zM16 3h1.12v1.12h-1.12zM18 3h7.12v1.12h-7.12zM28 3h9.12v1.12h-9.12zM39 3h10.12v1.12h-10.12zM2 4h5.12v1.12h-5.12zM12 4h1.12v1.12h-1.12zM14 4h4.12v1.12h-4.12zM20 4h1.12v1.12h-1.12zM22 4h1.12v1.12h-1.12zM28 4h1.12v1.12h-1.12zM33 4h1.12v1.12h-1.12zM39 4h1.12v1.12h-1.12zM42 4h1.12v1.12h-1.12zM45 4h1.12v1.12h-1.12zM4 5h1.12v1.12h-1.12zM12 5h1.12v1.12h-1.12zM16 5h1.12v1.12h-1.12zM30 5h7.12v1.12h-7.12zM39 5h9.12v1.12h-9.12zM4 6h1.12v1.12h-1.12zM6 6h1.12v1.12h-1.12zM12 6h1.12v1.12h-1.12zM16 6h1.12v1.12h-1.12zM19 6h6.12v1.12h-6.12zM26 6h3.12v1.12h-3.12zM30 6h1.12v1.12h-1.12zM33 6h1.12v1.12h-1.12zM36 6h1.12v1.12h-1.12zM39 6h1.12v1.12h-1.12zM42 6h1.12v1.12h-1.12zM45 6h1.12v1.12h-1.12zM4 7h2.12v1.12h-2.12zM8 7h5.12v1.12h-5.12zM16 7h2.12v1.12h-2.12zM19 7h1.12v1.12h-1.12zM21 7h1.12v1.12h-1.12zM24 7h1.12v1.12h-1.12zM28 7h1.12v1.12h-1.12zM30 7h7.12v1.12h-7.12zM39 7h1.12v1.12h-1.12zM42 7h4.12v1.12h-4.12zM3 8h2.12v1.12h-2.12zM12 8h1.12v1.12h-1.12zM15 8h2.12v1.12h-2.12zM19 8h1.12v1.12h-1.12zM21 8h1.12v1.12h-1.12zM24 8h1.12v1.12h-1.12zM28 8h1.12v1.12h-1.12zM32 8h3.12v1.12h-3.12zM39 8h1.12v1.12h-1.12zM2 9h1.12v1.12h-1.12zM4 9h1.12v1.12h-1.12zM12 9h1.12v1.12h-1.12zM14 9h1.12v1.12h-1.12zM16 9h1.12v1.12h-1.12zM19 9h6.12v1.12h-6.12zM28 9h1.12v1.12h-1.12zM31 9h1.12v1.12h-1.12zM33 9h1.12v1.12h-1.12zM35 9h1.12v1.12h-1.12zM39 9h1.12v1.12h-1.12zM41 9h6.12v1.12h-6.12zM4 10h1.12v1.12h-1.12zM12 10h1.12v1.12h-1.12zM16 10h1.12v1.12h-1.12zM19 10h1.12v1.12h-1.12zM21 10h1.12v1.12h-1.12zM24 10h1.12v1.12h-1.12zM28 10h1.12v1.12h-1.12zM30 10h1.12v1.12h-1.12zM33 10h1.12v1.12h-1.12zM36 10h1.12v1.12h-1.12zM39 10h1.12v1.12h-1.12zM42 10h1.12v1.12h-1.12zM45 10h1.12v1.12h-1.12zM4 11h1.12v1.12h-1.12zM7 11h6.12v1.12h-6.12zM16 11h1.12v1.12h-1.12zM19 11h6.12v1.12h-6.12zM27 11h1.12v1.12h-1.12zM29 11h1.12v1.12h-1.12zM33 11h1.12v1.12h-1.12zM38 11h1.12v1.12h-1.12zM43 11h2.12v1.12h-2.12zM2 12h3.12v1.12h-3.12zM14 12h3.12v1.12h-3.12zM19 12h1.12v1.12h-1.12zM24 12h1.12v1.12h-1.12zM26 12h1.12v1.12h-1.12zM30 12h7.12v1.12h-7.12zM38 12h1.12v1.12h-1.12zM40 12h3.12v1.12h-3.12zM45 12h3.12v1.12h-3.12z"/></svg>
<div class="a" style="left:354px;top:581px;width:62px;height:28px;background:#fff"></div>
<div class="a" style="left:354px;top:581px;width:61px;height:1px;background:#808080"></div>
<div class="a" style="left:354px;top:581px;width:1px;height:27px;background:#808080"></div>
<div class="a" style="left:355px;top:582px;width:59px;height:1px;background:#404040"></div>
<div class="a" style="left:355px;top:582px;width:1px;height:25px;background:#404040"></div>
<div class="a" style="left:354px;top:608px;width:62px;height:1px;background:#fff"></div>
<div class="a" style="left:415px;top:581px;width:1px;height:28px;background:#fff"></div>
<div class="a" style="left:355px;top:607px;width:60px;height:1px;background:#d4d0c8"></div>
<div class="a" style="left:414px;top:582px;width:1px;height:26px;background:#d4d0c8"></div>
<svg class="t" style="left:406.70px;top:587.50px" width="6.30" height="14.40" viewBox="0 0 7 16" preserveAspectRatio="none"><path fill="#000" d="M2 4h3v1h-3zM1 5h1v1h-1zM5 5h1v1h-1zM1 6h1v1h-1zM5 6h1v1h-1zM1 7h1v1h-1zM5 7h1v1h-1zM1 8h1v1h-1zM5 8h1v1h-1zM1 9h1v1h-1zM5 9h1v1h-1zM1 10h1v1h-1zM5 10h1v1h-1zM2 11h3v1h-3z"/></svg>
<div class="a" style="left:416px;top:582px;width:39px;height:26px;background:#d4d0c8"></div>
<div class="a" style="left:417px;top:583px;width:37px;height:1px;background:#e4e0d8"></div>
<div class="a" style="left:417px;top:583px;width:1px;height:24px;background:#e4e0d8"></div>
<div class="a" style="left:417px;top:606px;width:37px;height:1px;background:#808080"></div>
<div class="a" style="left:453px;top:583px;width:1px;height:24px;background:#808080"></div>
<div class="a" style="left:416px;top:582px;width:39px;height:1px;background:#fff"></div>
<div class="a" style="left:416px;top:582px;width:1px;height:26px;background:#fff"></div>
<div class="a" style="left:416px;top:607px;width:39px;height:1px;background:#404040"></div>
<div class="a" style="left:454px;top:582px;width:1px;height:26px;background:#404040"></div>
<div class="a" style="left:455px;top:582px;width:40px;height:26px;background:#d4d0c8"></div>
<div class="a" style="left:456px;top:583px;width:38px;height:1px;background:#fff"></div>
<div class="a" style="left:456px;top:583px;width:1px;height:24px;background:#fff"></div>
<div class="a" style="left:456px;top:606px;width:38px;height:1px;background:#808080"></div>
<div class="a" style="left:493px;top:583px;width:1px;height:24px;background:#808080"></div>
<div class="a" style="left:455px;top:582px;width:40px;height:1px;background:#e4e0d8"></div>
<div class="a" style="left:455px;top:582px;width:1px;height:26px;background:#e4e0d8"></div>
<div class="a" style="left:455px;top:607px;width:40px;height:1px;background:#404040"></div>
<div class="a" style="left:494px;top:582px;width:1px;height:26px;background:#404040"></div>
<svg class="t" style="left:416px;top:581px" width="79" height="27"><path d="M12.6 12.8L20.2 5.8V19.7Z M63.3 12.8L55.8 5.8V19.7Z" fill="#000"/></svg>
<svg class="t" style="left:511.08px;top:588.00px" width="45.75" height="14.40" viewBox="0 0 50 16" preserveAspectRatio="none"><path fill="#000" d="M31 2h1.12v1.12h-1.12zM39 2h1.12v1.12h-1.12zM45 2h1.12v1.12h-1.12zM27 3h10.12v1.12h-10.12zM40 3h9.12v1.12h-9.12zM40 4h1.12v1.12h-1.12zM45 4h1.12v1.12h-1.12zM29 5h5.12v1.12h-5.12zM42 5h7.12v1.12h-7.12zM29 6h1.12v1.12h-1.12zM33 6h1.12v1.12h-1.12zM38 6h3.12v1.12h-3.12zM42 6h1.12v1.12h-1.12zM45 6h1.12v1.12h-1.12zM48 6h1.12v1.12h-1.12zM27 7h9.12v1.12h-9.12zM40 7h1.12v1.12h-1.12zM42 7h7.12v1.12h-7.12zM27 8h1.12v1.12h-1.12zM35 8h1.12v1.12h-1.12zM40 8h1.12v1.12h-1.12zM44 8h3.12v1.12h-3.12zM27 9h1.12v1.12h-1.12zM29 9h5.12v1.12h-5.12zM35 9h1.12v1.12h-1.12zM40 9h1.12v1.12h-1.12zM43 9h1.12v1.12h-1.12zM45 9h1.12v1.12h-1.12zM47 9h1.12v1.12h-1.12zM27 10h1.12v1.12h-1.12zM29 10h1.12v1.12h-1.12zM33 10h1.12v1.12h-1.12zM35 10h1.12v1.12h-1.12zM40 10h1.12v1.12h-1.12zM42 10h1.12v1.12h-1.12zM45 10h1.12v1.12h-1.12zM48 10h1.12v1.12h-1.12zM27 11h1.12v1.12h-1.12zM29 11h5.12v1.12h-5.12zM35 11h1.12v1.12h-1.12zM39 11h1.12v1.12h-1.12zM41 11h1.12v1.12h-1.12zM45 11h1.12v1.12h-1.12zM27 12h1.12v1.12h-1.12zM34 12h2.12v1.12h-2.12zM38 12h1.12v1.12h-1.12zM42 12h7.12v1.12h-7.12zM26 3h1v1h-1zM2 4h3v1h-3zM1 5h1v1h-1zM5 5h1v1h-1zM1 6h1v1h-1zM5 6h1v1h-1zM15 6h1v1h-1zM1 7h1v1h-1zM5 7h1v1h-1zM15 7h1v1h-1zM1 8h1v1h-1zM5 8h1v1h-1zM1 9h1v1h-1zM5 9h1v1h-1zM1 10h1v1h-1zM5 10h1v1h-1zM15 10h1v1h-1zM2 11h3v1h-3zM15 11h1v1h-1z"/></svg>
<svg class="t" style="left:193.17px;top:628.40px" width="67.71" height="14.40" viewBox="0 0 74 16" preserveAspectRatio="none"><path fill="#000" d="M4 2h1.12v1.12h-1.12zM15 2h1.12v1.12h-1.12zM21 2h1.12v1.12h-1.12zM28 2h1.12v1.12h-1.12zM32 2h1.12v1.12h-1.12zM51 2h4.12v1.12h-4.12zM56 2h5.12v1.12h-5.12zM67 2h1.12v1.12h-1.12zM4 3h1.12v1.12h-1.12zM16 3h9.12v1.12h-9.12zM28 3h1.12v1.12h-1.12zM33 3h1.12v1.12h-1.12zM38 3h11.12v1.12h-11.12zM51 3h1.12v1.12h-1.12zM54 3h1.12v1.12h-1.12zM56 3h1.12v1.12h-1.12zM62 3h11.12v1.12h-11.12zM2 4h6.12v1.12h-6.12zM9 4h4.12v1.12h-4.12zM16 4h1.12v1.12h-1.12zM21 4h1.12v1.12h-1.12zM28 4h1.12v1.12h-1.12zM30 4h7.12v1.12h-7.12zM43 4h1.12v1.12h-1.12zM51 4h1.12v1.12h-1.12zM54 4h1.12v1.12h-1.12zM56 4h1.12v1.12h-1.12zM64 4h1.12v1.12h-1.12zM66 4h1.12v1.12h-1.12zM68 4h1.12v1.12h-1.12zM70 4h1.12v1.12h-1.12zM4 5h1.12v1.12h-1.12zM7 5h1.12v1.12h-1.12zM9 5h1.12v1.12h-1.12zM12 5h1.12v1.12h-1.12zM18 5h7.12v1.12h-7.12zM26 5h4.12v1.12h-4.12zM43 5h1.12v1.12h-1.12zM51 5h4.12v1.12h-4.12zM56 5h5.12v1.12h-5.12zM64 5h1.12v1.12h-1.12zM67 5h1.12v1.12h-1.12zM70 5h1.12v1.12h-1.12zM4 6h1.12v1.12h-1.12zM7 6h1.12v1.12h-1.12zM9 6h1.12v1.12h-1.12zM12 6h1.12v1.12h-1.12zM14 6h3.12v1.12h-3.12zM18 6h1.12v1.12h-1.12zM21 6h1.12v1.12h-1.12zM24 6h1.12v1.12h-1.12zM28 6h1.12v1.12h-1.12zM32 6h1.12v1.12h-1.12zM34 6h1.12v1.12h-1.12zM40 6h1.12v1.12h-1.12zM43 6h1.12v1.12h-1.12zM53 6h1.12v1.12h-1.12zM56 6h1.12v1.12h-1.12zM60 6h1.12v1.12h-1.12zM64 6h1.12v1.12h-1.12zM66 6h1.12v1.12h-1.12zM68 6h1.12v1.12h-1.12zM70 6h1.12v1.12h-1.12zM4 7h1.12v1.12h-1.12zM7 7h1.12v1.12h-1.12zM9 7h1.12v1.12h-1.12zM12 7h1.12v1.12h-1.12zM16 7h1.12v1.12h-1.12zM18 7h7.12v1.12h-7.12zM27 7h3.12v1.12h-3.12zM31 7h1.12v1.12h-1.12zM35 7h1.12v1.12h-1.12zM40 7h1.12v1.12h-1.12zM43 7h5.12v1.12h-5.12zM51 7h1.12v1.12h-1.12zM53 7h1.12v1.12h-1.12zM56 7h1.12v1.12h-1.12zM60 7h1.12v1.12h-1.12zM64 7h7.12v1.12h-7.12zM4 8h1.12v1.12h-1.12zM7 8h1.12v1.12h-1.12zM9 8h1.12v1.12h-1.12zM12 8h1.12v1.12h-1.12zM16 8h1.12v1.12h-1.12zM20 8h3.12v1.12h-3.12zM27 8h2.12v1.12h-2.12zM30 8h1.12v1.12h-1.12zM32 8h1.12v1.12h-1.12zM34 8h1.12v1.12h-1.12zM36 8h1.12v1.12h-1.12zM40 8h1.12v1.12h-1.12zM43 8h1.12v1.12h-1.12zM51 8h1.12v1.12h-1.12zM53 8h2.12v1.12h-2.12zM56 8h1.12v1.12h-1.12zM60 8h1.12v1.12h-1.12zM67 8h1.12v1.12h-1.12zM4 9h1.12v1.12h-1.12zM7 9h1.12v1.12h-1.12zM9 9h1.12v1.12h-1.12zM12 9h1.12v1.12h-1.12zM16 9h1.12v1.12h-1.12zM19 9h1.12v1.12h-1.12zM21 9h1.12v1.12h-1.12zM23 9h1.12v1.12h-1.12zM26 9h1.12v1.12h-1.12zM28 9h1.12v1.12h-1.12zM32 9h1.12v1.12h-1.12zM34 9h1.12v1.12h-1.12zM40 9h1.12v1.12h-1.12zM43 9h1.12v1.12h-1.12zM51 9h1.12v1.12h-1.12zM53 9h1.12v1.12h-1.12zM56 9h5.12v1.12h-5.12zM63 9h9.12v1.12h-9.12zM3 10h1.12v1.12h-1.12zM7 10h1.12v1.12h-1.12zM9 10h1.12v1.12h-1.12zM12 10h1.12v1.12h-1.12zM16 10h1.12v1.12h-1.12zM18 10h1.12v1.12h-1.12zM21 10h1.12v1.12h-1.12zM24 10h1.12v1.12h-1.12zM28 10h1.12v1.12h-1.12zM33 10h1.12v1.12h-1.12zM40 10h1.12v1.12h-1.12zM43 10h1.12v1.12h-1.12zM51 10h1.12v1.12h-1.12zM53 10h1.12v1.12h-1.12zM56 10h1.12v1.12h-1.12zM63 10h1.12v1.12h-1.12zM66 10h1.12v1.12h-1.12zM69 10h1.12v1.12h-1.12zM71 10h1.12v1.12h-1.12zM3 11h1.12v1.12h-1.12zM5 11h1.12v1.12h-1.12zM7 11h1.12v1.12h-1.12zM9 11h4.12v1.12h-4.12zM15 11h1.12v1.12h-1.12zM17 11h1.12v1.12h-1.12zM21 11h1.12v1.12h-1.12zM28 11h1.12v1.12h-1.12zM32 11h1.12v1.12h-1.12zM34 11h1.12v1.12h-1.12zM40 11h1.12v1.12h-1.12zM43 11h1.12v1.12h-1.12zM51 11h1.12v1.12h-1.12zM53 11h4.12v1.12h-4.12zM63 11h1.12v1.12h-1.12zM65 11h5.12v1.12h-5.12zM71 11h1.12v1.12h-1.12zM2 12h1.12v1.12h-1.12zM6 12h1.12v1.12h-1.12zM9 12h1.12v1.12h-1.12zM12 12h1.12v1.12h-1.12zM14 12h1.12v1.12h-1.12zM18 12h7.12v1.12h-7.12zM28 12h1.12v1.12h-1.12zM30 12h2.12v1.12h-2.12zM35 12h2.12v1.12h-2.12zM38 12h11.12v1.12h-11.12zM50 12h3.12v1.12h-3.12zM56 12h5.12v1.12h-5.12zM63 12h1.12v1.12h-1.12zM70 12h2.12v1.12h-2.12z"/></svg>
<div class="a" style="left:354px;top:622px;width:62px;height:28px;background:#fff"></div>
<div class="a" style="left:354px;top:622px;width:61px;height:1px;background:#808080"></div>
<div class="a" style="left:354px;top:622px;width:1px;height:27px;background:#808080"></div>
<div class="a" style="left:355px;top:623px;width:59px;height:1px;background:#404040"></div>
<div class="a" style="left:355px;top:623px;width:1px;height:25px;background:#404040"></div>
<div class="a" style="left:354px;top:649px;width:62px;height:1px;background:#fff"></div>
<div class="a" style="left:415px;top:622px;width:1px;height:28px;background:#fff"></div>
<div class="a" style="left:355px;top:648px;width:60px;height:1px;background:#d4d0c8"></div>
<div class="a" style="left:414px;top:623px;width:1px;height:26px;background:#d4d0c8"></div>
<svg class="t" style="left:379.70px;top:628.50px" width="33.30" height="14.40" viewBox="0 0 37 16" preserveAspectRatio="none"><path fill="#000" d="M1 4h3v1h-3zM8 4h3v1h-3zM14 4h3v1h-3zM20 4h3v1h-3zM26 4h3v1h-3zM32 4h3v1h-3zM3 5h1v1h-1zM7 5h1v1h-1zM11 5h1v1h-1zM13 5h1v1h-1zM17 5h1v1h-1zM19 5h1v1h-1zM23 5h1v1h-1zM25 5h1v1h-1zM29 5h1v1h-1zM31 5h1v1h-1zM35 5h1v1h-1zM3 6h1v1h-1zM7 6h1v1h-1zM11 6h1v1h-1zM13 6h1v1h-1zM17 6h1v1h-1zM19 6h1v1h-1zM23 6h1v1h-1zM25 6h1v1h-1zM29 6h1v1h-1zM31 6h1v1h-1zM35 6h1v1h-1zM3 7h1v1h-1zM7 7h1v1h-1zM11 7h1v1h-1zM13 7h1v1h-1zM17 7h1v1h-1zM19 7h1v1h-1zM23 7h1v1h-1zM25 7h1v1h-1zM29 7h1v1h-1zM31 7h1v1h-1zM35 7h1v1h-1zM3 8h1v1h-1zM7 8h1v1h-1zM11 8h1v1h-1zM13 8h1v1h-1zM17 8h1v1h-1zM19 8h1v1h-1zM23 8h1v1h-1zM25 8h1v1h-1zM29 8h1v1h-1zM31 8h1v1h-1zM35 8h1v1h-1zM3 9h1v1h-1zM7 9h1v1h-1zM11 9h1v1h-1zM13 9h1v1h-1zM17 9h1v1h-1zM19 9h1v1h-1zM23 9h1v1h-1zM25 9h1v1h-1zM29 9h1v1h-1zM31 9h1v1h-1zM35 9h1v1h-1zM3 10h1v1h-1zM7 10h1v1h-1zM11 10h1v1h-1zM13 10h1v1h-1zM17 10h1v1h-1zM19 10h1v1h-1zM23 10h1v1h-1zM25 10h1v1h-1zM29 10h1v1h-1zM31 10h1v1h-1zM35 10h1v1h-1zM1 11h5v1h-5zM8 11h3v1h-3zM14 11h3v1h-3zM20 11h3v1h-3zM26 11h3v1h-3zM32 11h3v1h-3z"/></svg>
<svg class="t" style="left:510.17px;top:628.40px" width="67.71" height="14.40" viewBox="0 0 74 16" preserveAspectRatio="none"><path fill="#000" d="M10 2h2.12v1.12h-2.12zM15 2h1.12v1.12h-1.12zM21 2h1.12v1.12h-1.12zM28 2h1.12v1.12h-1.12zM32 2h1.12v1.12h-1.12zM51 2h4.12v1.12h-4.12zM56 2h5.12v1.12h-5.12zM67 2h1.12v1.12h-1.12zM2 3h1.12v1.12h-1.12zM10 3h1.12v1.12h-1.12zM12 3h1.12v1.12h-1.12zM16 3h9.12v1.12h-9.12zM28 3h1.12v1.12h-1.12zM33 3h1.12v1.12h-1.12zM38 3h11.12v1.12h-11.12zM51 3h1.12v1.12h-1.12zM54 3h1.12v1.12h-1.12zM56 3h1.12v1.12h-1.12zM62 3h11.12v1.12h-11.12zM3 4h1.12v1.12h-1.12zM5 4h8.12v1.12h-8.12zM16 4h1.12v1.12h-1.12zM21 4h1.12v1.12h-1.12zM28 4h1.12v1.12h-1.12zM30 4h7.12v1.12h-7.12zM43 4h1.12v1.12h-1.12zM51 4h1.12v1.12h-1.12zM54 4h1.12v1.12h-1.12zM56 4h1.12v1.12h-1.12zM64 4h1.12v1.12h-1.12zM66 4h1.12v1.12h-1.12zM68 4h1.12v1.12h-1.12zM70 4h1.12v1.12h-1.12zM3 5h1.12v1.12h-1.12zM5 5h1.12v1.12h-1.12zM10 5h1.12v1.12h-1.12zM18 5h7.12v1.12h-7.12zM26 5h4.12v1.12h-4.12zM43 5h1.12v1.12h-1.12zM51 5h4.12v1.12h-4.12zM56 5h5.12v1.12h-5.12zM64 5h1.12v1.12h-1.12zM67 5h1.12v1.12h-1.12zM70 5h1.12v1.12h-1.12zM5 6h1.12v1.12h-1.12zM7 6h4.12v1.12h-4.12zM14 6h3.12v1.12h-3.12zM18 6h1.12v1.12h-1.12zM21 6h1.12v1.12h-1.12zM24 6h1.12v1.12h-1.12zM28 6h1.12v1.12h-1.12zM32 6h1.12v1.12h-1.12zM34 6h1.12v1.12h-1.12zM40 6h1.12v1.12h-1.12zM43 6h1.12v1.12h-1.12zM53 6h1.12v1.12h-1.12zM56 6h1.12v1.12h-1.12zM60 6h1.12v1.12h-1.12zM64 6h1.12v1.12h-1.12zM66 6h1.12v1.12h-1.12zM68 6h1.12v1.12h-1.12zM70 6h1.12v1.12h-1.12zM4 7h2.12v1.12h-2.12zM10 7h1.12v1.12h-1.12zM12 7h1.12v1.12h-1.12zM16 7h1.12v1.12h-1.12zM18 7h7.12v1.12h-7.12zM27 7h3.12v1.12h-3.12zM31 7h1.12v1.12h-1.12zM35 7h1.12v1.12h-1.12zM40 7h1.12v1.12h-1.12zM43 7h5.12v1.12h-5.12zM51 7h1.12v1.12h-1.12zM53 7h1.12v1.12h-1.12zM56 7h1.12v1.12h-1.12zM60 7h1.12v1.12h-1.12zM64 7h7.12v1.12h-7.12zM3 8h1.12v1.12h-1.12zM5 8h1.12v1.12h-1.12zM7 8h4.12v1.12h-4.12zM12 8h1.12v1.12h-1.12zM16 8h1.12v1.12h-1.12zM20 8h3.12v1.12h-3.12zM27 8h2.12v1.12h-2.12zM30 8h1.12v1.12h-1.12zM32 8h1.12v1.12h-1.12zM34 8h1.12v1.12h-1.12zM36 8h1.12v1.12h-1.12zM40 8h1.12v1.12h-1.12zM43 8h1.12v1.12h-1.12zM51 8h1.12v1.12h-1.12zM53 8h2.12v1.12h-2.12zM56 8h1.12v1.12h-1.12zM60 8h1.12v1.12h-1.12zM67 8h1.12v1.12h-1.12zM2 9h2.12v1.12h-2.12zM5 9h1.12v1.12h-1.12zM7 9h1.12v1.12h-1.12zM9 9h3.12v1.12h-3.12zM16 9h1.12v1.12h-1.12zM19 9h1.12v1.12h-1.12zM21 9h1.12v1.12h-1.12zM23 9h1.12v1.12h-1.12zM26 9h1.12v1.12h-1.12zM28 9h1.12v1.12h-1.12zM32 9h1.12v1.12h-1.12zM34 9h1.12v1.12h-1.12zM40 9h1.12v1.12h-1.12zM43 9h1.12v1.12h-1.12zM51 9h1.12v1.12h-1.12zM53 9h1.12v1.12h-1.12zM56 9h5.12v1.12h-5.12zM63 9h9.12v1.12h-9.12zM3 10h1.12v1.12h-1.12zM5 10h1.12v1.12h-1.12zM7 10h2.12v1.12h-2.12zM10 10h1.12v1.12h-1.12zM12 10h1.12v1.12h-1.12zM16 10h1.12v1.12h-1.12zM18 10h1.12v1.12h-1.12zM21 10h1.12v1.12h-1.12zM24 10h1.12v1.12h-1.12zM28 10h1.12v1.12h-1.12zM33 10h1.12v1.12h-1.12zM40 10h1.12v1.12h-1.12zM43 10h1.12v1.12h-1.12zM51 10h1.12v1.12h-1.12zM53 10h1.12v1.12h-1.12zM56 10h1.12v1.12h-1.12zM63 10h1.12v1.12h-1.12zM66 10h1.12v1.12h-1.12zM69 10h1.12v1.12h-1.12zM71 10h1.12v1.12h-1.12zM3 11h1.12v1.12h-1.12zM5 11h1.12v1.12h-1.12zM9 11h1.12v1.12h-1.12zM11 11h2.12v1.12h-2.12zM15 11h1.12v1.12h-1.12zM17 11h1.12v1.12h-1.12zM21 11h1.12v1.12h-1.12zM28 11h1.12v1.12h-1.12zM32 11h1.12v1.12h-1.12zM34 11h1.12v1.12h-1.12zM40 11h1.12v1.12h-1.12zM43 11h1.12v1.12h-1.12zM51 11h1.12v1.12h-1.12zM53 11h4.12v1.12h-4.12zM63 11h1.12v1.12h-1.12zM65 11h5.12v1.12h-5.12zM71 11h1.12v1.12h-1.12zM3 12h2.12v1.12h-2.12zM8 12h1.12v1.12h-1.12zM12 12h1.12v1.12h-1.12zM14 12h1.12v1.12h-1.12zM18 12h7.12v1.12h-7.12zM28 12h1.12v1.12h-1.12zM30 12h2.12v1.12h-2.12zM35 12h2.12v1.12h-2.12zM38 12h11.12v1.12h-11.12zM50 12h3.12v1.12h-3.12zM56 12h5.12v1.12h-5.12zM63 12h1.12v1.12h-1.12zM70 12h2.12v1.12h-2.12z"/></svg>
<div class="a" style="left:671px;top:622px;width:62px;height:28px;background:#fff"></div>
<div class="a" style="left:671px;top:622px;width:61px;height:1px;background:#808080"></div>
<div class="a" style="left:671px;top:622px;width:1px;height:27px;background:#808080"></div>
<div class="a" style="left:672px;top:623px;width:59px;height:1px;background:#404040"></div>
<div class="a" style="left:672px;top:623px;width:1px;height:25px;background:#404040"></div>
<div class="a" style="left:671px;top:649px;width:62px;height:1px;background:#fff"></div>
<div class="a" style="left:732px;top:622px;width:1px;height:28px;background:#fff"></div>
<div class="a" style="left:672px;top:648px;width:60px;height:1px;background:#d4d0c8"></div>
<div class="a" style="left:731px;top:623px;width:1px;height:26px;background:#d4d0c8"></div>
<svg class="t" style="left:696.70px;top:628.50px" width="33.30" height="14.40" viewBox="0 0 37 16" preserveAspectRatio="none"><path fill="#000" d="M1 4h3v1h-3zM8 4h3v1h-3zM14 4h3v1h-3zM20 4h3v1h-3zM26 4h3v1h-3zM32 4h3v1h-3zM3 5h1v1h-1zM7 5h1v1h-1zM11 5h1v1h-1zM13 5h1v1h-1zM17 5h1v1h-1zM19 5h1v1h-1zM23 5h1v1h-1zM25 5h1v1h-1zM29 5h1v1h-1zM31 5h1v1h-1zM35 5h1v1h-1zM3 6h1v1h-1zM7 6h1v1h-1zM11 6h1v1h-1zM13 6h1v1h-1zM17 6h1v1h-1zM19 6h1v1h-1zM23 6h1v1h-1zM25 6h1v1h-1zM29 6h1v1h-1zM31 6h1v1h-1zM35 6h1v1h-1zM3 7h1v1h-1zM7 7h1v1h-1zM11 7h1v1h-1zM13 7h1v1h-1zM17 7h1v1h-1zM19 7h1v1h-1zM23 7h1v1h-1zM25 7h1v1h-1zM29 7h1v1h-1zM31 7h1v1h-1zM35 7h1v1h-1zM3 8h1v1h-1zM7 8h1v1h-1zM11 8h1v1h-1zM13 8h1v1h-1zM17 8h1v1h-1zM19 8h1v1h-1zM23 8h1v1h-1zM25 8h1v1h-1zM29 8h1v1h-1zM31 8h1v1h-1zM35 8h1v1h-1zM3 9h1v1h-1zM7 9h1v1h-1zM11 9h1v1h-1zM13 9h1v1h-1zM17 9h1v1h-1zM19 9h1v1h-1zM23 9h1v1h-1zM25 9h1v1h-1zM29 9h1v1h-1zM31 9h1v1h-1zM35 9h1v1h-1zM3 10h1v1h-1zM7 10h1v1h-1zM11 10h1v1h-1zM13 10h1v1h-1zM17 10h1v1h-1zM19 10h1v1h-1zM23 10h1v1h-1zM25 10h1v1h-1zM29 10h1v1h-1zM31 10h1v1h-1zM35 10h1v1h-1zM1 11h5v1h-5zM8 11h3v1h-3zM14 11h3v1h-3zM20 11h3v1h-3zM26 11h3v1h-3zM32 11h3v1h-3z"/></svg>
<div class="a" style="left:636px;top:703px;width:123px;height:41px;background:#000"></div>
<div class="a" style="left:637px;top:704px;width:121px;height:39px;background:#d4d0c8"></div>
<div class="a" style="left:638px;top:705px;width:119px;height:1px;background:#d4d0c8"></div>
<div class="a" style="left:638px;top:705px;width:1px;height:37px;background:#d4d0c8"></div>
<div class="a" style="left:638px;top:741px;width:119px;height:1px;background:#808080"></div>
<div class="a" style="left:756px;top:705px;width:1px;height:37px;background:#808080"></div>
<div class="a" style="left:637px;top:704px;width:121px;height:1px;background:#fff"></div>
<div class="a" style="left:637px;top:704px;width:1px;height:39px;background:#fff"></div>
<div class="a" style="left:637px;top:742px;width:121px;height:1px;background:#404040"></div>
<div class="a" style="left:757px;top:704px;width:1px;height:39px;background:#404040"></div>
<div class="a" style="left:640px;top:707px;width:115px;height:34px;border:1px dotted #000;box-sizing:border-box"></div>
<svg class="t" style="left:684.17px;top:716.20px" width="23.79" height="14.40" viewBox="0 0 26 16" preserveAspectRatio="none"><path fill="#000" d="M8 2h1.12v1.12h-1.12zM19 2h1.12v1.12h-1.12zM2 3h4.12v1.12h-4.12zM8 3h4.12v1.12h-4.12zM15 3h10.12v1.12h-10.12zM4 4h1.12v1.12h-1.12zM7 4h1.12v1.12h-1.12zM10 4h1.12v1.12h-1.12zM15 4h1.12v1.12h-1.12zM24 4h1.12v1.12h-1.12zM3 5h1.12v1.12h-1.12zM6 5h7.12v1.12h-7.12zM14 5h1.12v1.12h-1.12zM23 5h1.12v1.12h-1.12zM2 6h4.12v1.12h-4.12zM7 6h1.12v1.12h-1.12zM9 6h1.12v1.12h-1.12zM12 6h1.12v1.12h-1.12zM16 6h8.12v1.12h-8.12zM3 7h1.12v1.12h-1.12zM5 7h1.12v1.12h-1.12zM7 7h6.12v1.12h-6.12zM19 7h1.12v1.12h-1.12zM3 8h1.12v1.12h-1.12zM5 8h1.12v1.12h-1.12zM7 8h1.12v1.12h-1.12zM9 8h1.12v1.12h-1.12zM12 8h1.12v1.12h-1.12zM16 8h1.12v1.12h-1.12zM19 8h1.12v1.12h-1.12zM3 9h1.12v1.12h-1.12zM5 9h1.12v1.12h-1.12zM7 9h6.12v1.12h-6.12zM16 9h1.12v1.12h-1.12zM19 9h4.12v1.12h-4.12zM3 10h3.12v1.12h-3.12zM7 10h1.12v1.12h-1.12zM9 10h1.12v1.12h-1.12zM12 10h1.12v1.12h-1.12zM16 10h1.12v1.12h-1.12zM19 10h1.12v1.12h-1.12zM3 11h1.12v1.12h-1.12zM7 11h1.12v1.12h-1.12zM9 11h1.12v1.12h-1.12zM12 11h1.12v1.12h-1.12zM15 11h1.12v1.12h-1.12zM17 11h1.12v1.12h-1.12zM19 11h1.12v1.12h-1.12zM6 12h1.12v1.12h-1.12zM11 12h2.12v1.12h-2.12zM14 12h1.12v1.12h-1.12zM18 12h7.12v1.12h-7.12z"/></svg>
<div class="a" style="left:778px;top:703px;width:123px;height:41px;background:#d4d0c8"></div>
<div class="a" style="left:779px;top:704px;width:121px;height:1px;background:#d4d0c8"></div>
<div class="a" style="left:779px;top:704px;width:1px;height:39px;background:#d4d0c8"></div>
<div class="a" style="left:779px;top:742px;width:121px;height:1px;background:#808080"></div>
<div class="a" style="left:899px;top:704px;width:1px;height:39px;background:#808080"></div>
<div class="a" style="left:778px;top:703px;width:123px;height:1px;background:#fff"></div>
<div class="a" style="left:778px;top:703px;width:1px;height:41px;background:#fff"></div>
<div class="a" style="left:778px;top:743px;width:123px;height:1px;background:#404040"></div>
<div class="a" style="left:900px;top:703px;width:1px;height:41px;background:#404040"></div>
<svg class="t" style="left:826.17px;top:716.20px" width="23.79" height="14.40" viewBox="0 0 26 16" preserveAspectRatio="none"><path fill="#000" d="M2 2h6.12v1.12h-6.12zM15 2h1.12v1.12h-1.12zM18 2h1.12v1.12h-1.12zM21 2h1.12v1.12h-1.12zM24 2h1.12v1.12h-1.12zM3 3h1.12v1.12h-1.12zM6 3h1.12v1.12h-1.12zM8 3h5.12v1.12h-5.12zM16 3h1.12v1.12h-1.12zM19 3h1.12v1.12h-1.12zM21 3h1.12v1.12h-1.12zM23 3h1.12v1.12h-1.12zM3 4h1.12v1.12h-1.12zM6 4h1.12v1.12h-1.12zM8 4h1.12v1.12h-1.12zM12 4h1.12v1.12h-1.12zM14 4h1.12v1.12h-1.12zM21 4h1.12v1.12h-1.12zM3 5h4.12v1.12h-4.12zM8 5h1.12v1.12h-1.12zM12 5h1.12v1.12h-1.12zM15 5h1.12v1.12h-1.12zM17 5h1.12v1.12h-1.12zM19 5h6.12v1.12h-6.12zM3 6h1.12v1.12h-1.12zM6 6h1.12v1.12h-1.12zM9 6h1.12v1.12h-1.12zM11 6h1.12v1.12h-1.12zM17 6h1.12v1.12h-1.12zM19 6h1.12v1.12h-1.12zM24 6h1.12v1.12h-1.12zM3 7h4.12v1.12h-4.12zM9 7h1.12v1.12h-1.12zM11 7h1.12v1.12h-1.12zM16 7h1.12v1.12h-1.12zM19 7h6.12v1.12h-6.12zM3 8h1.12v1.12h-1.12zM6 8h1.12v1.12h-1.12zM10 8h1.12v1.12h-1.12zM16 8h1.12v1.12h-1.12zM19 8h1.12v1.12h-1.12zM24 8h1.12v1.12h-1.12zM3 9h1.12v1.12h-1.12zM6 9h2.12v1.12h-2.12zM10 9h1.12v1.12h-1.12zM14 9h2.12v1.12h-2.12zM19 9h6.12v1.12h-6.12zM2 10h5.12v1.12h-5.12zM9 10h1.12v1.12h-1.12zM11 10h1.12v1.12h-1.12zM15 10h1.12v1.12h-1.12zM19 10h1.12v1.12h-1.12zM24 10h1.12v1.12h-1.12zM6 11h1.12v1.12h-1.12zM8 11h1.12v1.12h-1.12zM11 11h1.12v1.12h-1.12zM15 11h1.12v1.12h-1.12zM19 11h1.12v1.12h-1.12zM24 11h1.12v1.12h-1.12zM6 12h2.12v1.12h-2.12zM12 12h1.12v1.12h-1.12zM15 12h1.12v1.12h-1.12zM19 12h1.12v1.12h-1.12zM23 12h2.12v1.12h-2.12z"/></svg>
</body></html>
